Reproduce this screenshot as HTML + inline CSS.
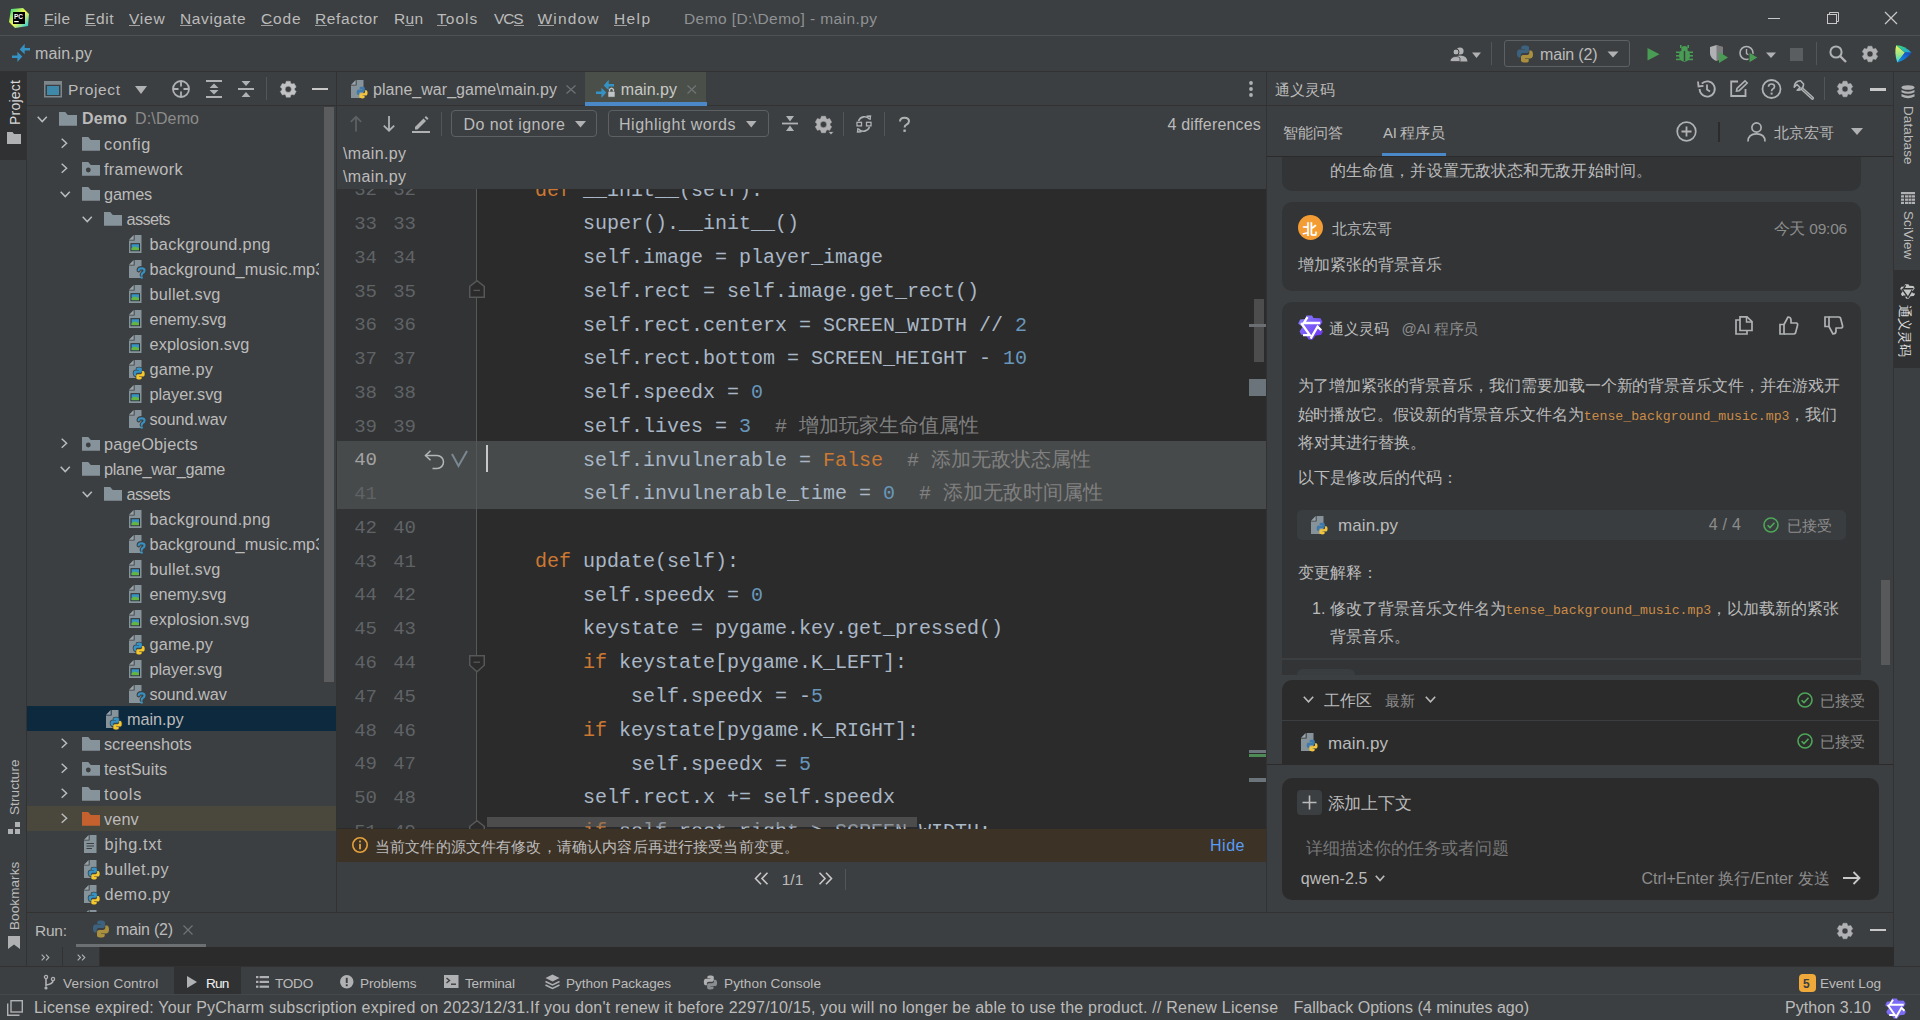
<!DOCTYPE html>
<html><head><meta charset="utf-8">
<style>
*{margin:0;padding:0;box-sizing:border-box}
html,body{width:1920px;height:1020px;overflow:hidden;background:#3c3f41;font-family:"Liberation Sans",sans-serif;color:#bbbbbb}
.a{position:absolute}
.t{position:absolute;white-space:nowrap;line-height:1}
.mono{font-family:"Liberation Mono",monospace}
svg{position:absolute;overflow:visible}
</style></head><body>

<div class="a" style="left:0px;top:35px;width:1920px;height:1px;background:#4e5254;"></div>
<div class="a" style="left:0px;top:71px;width:1920px;height:1px;background:#323232;"></div>
<div class="a" style="left:26px;top:72px;width:1px;height:894px;background:#323232;"></div>
<div class="a" style="left:0px;top:72px;width:26px;height:88px;background:#2f3132;"></div>
<div class="a" style="left:27px;top:105px;width:309px;height:1px;background:#323232;"></div>
<div class="a" style="left:336px;top:72px;width:1px;height:840px;background:#323232;"></div>
<div class="a" style="left:337px;top:105px;width:929px;height:1px;background:#323232;"></div>
<div class="a" style="left:337px;top:189px;width:929px;height:640px;background:#2b2b2b;"></div>
<div class="a" style="left:337px;top:189px;width:139px;height:639px;background:#313335;"></div>
<div class="a" style="left:476px;top:189px;width:1px;height:639px;background:#555555;"></div>
<div class="a" style="left:337px;top:829px;width:929px;height:33px;background:#3d3226;"></div>
<div class="a" style="left:1266px;top:72px;width:1px;height:840px;background:#323232;"></div>
<div class="a" style="left:1893px;top:72px;width:1px;height:894px;background:#323232;"></div>
<div class="a" style="left:27px;top:912px;width:1866px;height:1px;background:#323232;"></div>
<div class="a" style="left:99px;top:947px;width:1795px;height:19px;background:#2b2b2b;"></div>
<div class="a" style="left:62px;top:947px;width:1px;height:19px;background:#323232;"></div>
<div class="a" style="left:99px;top:947px;width:1px;height:19px;background:#323232;"></div>
<div class="a" style="left:0px;top:966px;width:1920px;height:1px;background:#323232;"></div>
<div class="a" style="left:0px;top:994px;width:1920px;height:1px;background:#45484a;"></div>
<svg style="left:9px;top:8px" width="20" height="20" viewBox="0 0 20 20"><defs><linearGradient id="pcg" x1="0" y1="0" x2="1" y2="1"><stop offset="0" stop-color="#21d789"/><stop offset="0.5" stop-color="#fcf84a"/><stop offset="1" stop-color="#07c3f2"/></linearGradient></defs>
<path d="M2 1 L14 0 L20 6 L19 18 L6 20 L0 14 Z" fill="url(#pcg)"/>
<rect x="4" y="4" width="12" height="12" fill="#000"/>
<text x="5" y="10.5" font-family="Liberation Sans" font-weight="bold" font-size="6.5" fill="#fff">PC</text>
<rect x="5.2" y="13" width="4.5" height="1.2" fill="#fff"/></svg>
<div class="t" style="left:44.00px;top:10.88px;font-size:15.5px;color:#bbbbbb;letter-spacing:0.341px;">File</div>
<div class="a" style="left:44px;top:25px;width:10px;height:1px;background:#a0a0a0;"></div>
<div class="t" style="left:85.00px;top:10.88px;font-size:15.5px;color:#bbbbbb;letter-spacing:0.597px;">Edit</div>
<div class="a" style="left:85px;top:25px;width:11px;height:1px;background:#a0a0a0;"></div>
<div class="t" style="left:129.00px;top:10.88px;font-size:15.5px;color:#bbbbbb;letter-spacing:0.801px;">View</div>
<div class="a" style="left:129px;top:25px;width:11px;height:1px;background:#a0a0a0;"></div>
<div class="t" style="left:180.00px;top:10.88px;font-size:15.5px;color:#bbbbbb;letter-spacing:0.618px;">Navigate</div>
<div class="a" style="left:180px;top:25px;width:12px;height:1px;background:#a0a0a0;"></div>
<div class="t" style="left:261.00px;top:10.88px;font-size:15.5px;color:#bbbbbb;letter-spacing:0.815px;">Code</div>
<div class="a" style="left:261px;top:25px;width:12px;height:1px;background:#a0a0a0;"></div>
<div class="t" style="left:315.00px;top:10.88px;font-size:15.5px;color:#bbbbbb;letter-spacing:0.631px;">Refactor</div>
<div class="a" style="left:315px;top:25px;width:12px;height:1px;background:#a0a0a0;"></div>
<div class="t" style="left:394.00px;top:10.88px;font-size:15.5px;color:#bbbbbb;letter-spacing:0.282px;">Run</div>
<div class="a" style="left:405px;top:25px;width:9px;height:1px;background:#a0a0a0;"></div>
<div class="t" style="left:437.00px;top:10.88px;font-size:15.5px;color:#bbbbbb;letter-spacing:1.024px;">Tools</div>
<div class="a" style="left:437px;top:25px;width:10px;height:1px;background:#a0a0a0;"></div>
<div class="t" style="left:494.00px;top:10.88px;font-size:15.5px;color:#bbbbbb;letter-spacing:-1.186px;">VCS</div>
<div class="a" style="left:514px;top:25px;width:10px;height:1px;background:#a0a0a0;"></div>
<div class="t" style="left:537.50px;top:10.88px;font-size:15.5px;color:#bbbbbb;letter-spacing:1.174px;">Window</div>
<div class="a" style="left:538px;top:25px;width:16px;height:1px;background:#a0a0a0;"></div>
<div class="t" style="left:614.00px;top:10.88px;font-size:15.5px;color:#bbbbbb;letter-spacing:1.374px;">Help</div>
<div class="a" style="left:614px;top:25px;width:13px;height:1px;background:#a0a0a0;"></div>
<div class="t" style="left:684.00px;top:10.88px;font-size:15.5px;color:#8f9294;letter-spacing:0.414px;">Demo [D:\Demo] - main.py</div>
<svg style="left:1767px;top:12px" width="132" height="14" viewBox="0 0 132 14"><line x1="1" y1="6.5" x2="13" y2="6.5" stroke="#c8c8c8" stroke-width="1"/>
<rect x="60.5" y="2.5" width="9" height="9" fill="none" stroke="#c8c8c8" stroke-width="1"/>
<path d="M62.5 2.5 V0.5 H71.5 V9.5 H69.5" fill="none" stroke="#c8c8c8" stroke-width="1"/>
<path d="M118 0 L130 12 M130 0 L118 12" stroke="#c8c8c8" stroke-width="1.2"/></svg>
<svg style="left:12px;top:43px" width="18" height="19" viewBox="0 0 18 19"><path d="M7.7 6.4 L12.7 0.8 L12.7 4.9 L18 4.9 L18 7.5 L12.7 7.5 L12.7 11.2 Z" fill="#3592c4"/>
<path d="M10.3 13.6 L5.4 8.7 L5.4 12.4 L0 12.4 L0 15 L5.4 15 L5.4 19 Z" fill="#3592c4"/></svg>
<div class="t" style="left:35.00px;top:46.46px;font-size:16px;color:#bbbbbb;letter-spacing:0.163px;">main.py</div>
<svg style="left:1450px;top:47px" width="32" height="15" viewBox="0 0 32 15"><circle cx="10" cy="4" r="3.6" fill="#afb1b3"/><path d="M2.5 14.5 Q3 8.5 10 8.5 Q17 8.5 17.5 14.5 Z" fill="#afb1b3"/>
<circle cx="6" cy="5" r="3" fill="#afb1b3" stroke="#3c3f41" stroke-width="1"/><path d="M0 14.5 Q0.5 9.5 6 9.5 Q9 9.5 10 11 L10 14.5 Z" fill="#afb1b3" stroke="#3c3f41" stroke-width="0.8"/>
<path d="M22 5.5 L31 5.5 L26.5 11 Z" fill="#afb1b3"/></svg>
<div class="a" style="left:1491px;top:42px;width:1px;height:23px;background:#515658;"></div>
<div class="a" style="left:1504px;top:40px;width:126px;height:27px;border:1px solid #5e6163;border-radius:3px"></div>
<svg style="left:1516px;top:45px" width="18" height="18" viewBox="0 0 18 18"><g opacity="0.6"><path d="M8.8 0.5 C5 0.5 5.3 2.2 5.3 2.2 L5.3 4 L9 4 L9 4.6 L3.6 4.6 C3.6 4.6 1 4.3 1 8.4 C1 12.5 3.3 12.4 3.3 12.4 L4.7 12.4 L4.7 10.4 C4.7 10.4 4.6 8.1 7 8.1 L10.8 8.1 C10.8 8.1 13 8.1 13 6 L13 2.6 C13 2.6 13.3 0.5 8.8 0.5 Z" fill="#3d7aab"/>
<path d="M9.2 17.5 C13 17.5 12.7 15.8 12.7 15.8 L12.7 14 L9 14 L9 13.4 L14.4 13.4 C14.4 13.4 17 13.7 17 9.6 C17 5.5 14.7 5.6 14.7 5.6 L13.3 5.6 L13.3 7.6 C13.3 7.6 13.4 9.9 11 9.9 L7.2 9.9 C7.2 9.9 5 9.9 5 12 L5 15.4 C5 15.4 4.7 17.5 9.2 17.5 Z" fill="#f2c53d"/></g></svg>
<div class="t" style="left:1540.00px;top:47.46px;font-size:16px;color:#bbbbbb;letter-spacing:-0.169px;">main (2)</div>
<svg style="left:1607px;top:51px" width="12" height="7" viewBox="0 0 12 7"><path d="M0.5 0.5 L11.5 0.5 L6 6.5 Z" fill="#afb1b3"/></svg>
<svg style="left:1647px;top:48px" width="13" height="13" viewBox="0 0 13 13"><path d="M0.5 0 L12.5 6.25 L0.5 12.5 Z" fill="#499c54"/></svg>
<svg style="left:1676px;top:45px" width="17" height="17" viewBox="0 0 17 17"><g fill="#499c54"><ellipse cx="8.5" cy="10.5" rx="5.5" ry="6.2"/><ellipse cx="8.5" cy="3.8" rx="3.2" ry="2.8"/>
<rect x="0" y="6.5" width="17" height="1.6"/><rect x="0" y="10" width="17" height="1.6"/><rect x="0" y="13.6" width="17" height="1.6"/>
<rect x="4" y="0" width="1.6" height="3"/><rect x="11.4" y="0" width="1.6" height="3"/></g><rect x="7.8" y="6" width="1.4" height="10" fill="#3c3f41"/></svg>
<svg style="left:1709px;top:45px" width="19" height="18" viewBox="0 0 19 18"><path d="M1 2 L7.5 0 L14 2 L14 8 C14 12 10.5 15 7.5 16 C4.5 15 1 12 1 8 Z" fill="#afb1b3"/><path d="M7.5 0 L14 2 L14 8 C14 12 10.5 15 7.5 16 Z" fill="#3c3f41" opacity="0.45"/>
<path d="M10 7 L19 12.5 L10 18 Z" fill="#499c54"/></svg>
<svg style="left:1739px;top:45px" width="38" height="18" viewBox="0 0 38 18"><circle cx="7.5" cy="8" r="6.5" fill="none" stroke="#afb1b3" stroke-width="1.6"/><path d="M7.5 4 V8.5 L10 10" fill="none" stroke="#afb1b3" stroke-width="1.4"/>
<path d="M10 7 L19 12.5 L10 18 Z" fill="#499c54" stroke="#3c3f41" stroke-width="1"/>
<path d="M27 7.5 L37 7.5 L32 13 Z" fill="#afb1b3"/></svg>
<div class="a" style="left:1790px;top:48px;width:13px;height:13px;background:#5b5e60;"></div>
<div class="a" style="left:1816px;top:42px;width:1px;height:23px;background:#515658;"></div>
<svg style="left:1829px;top:45px" width="18" height="18" viewBox="0 0 18 18"><circle cx="7" cy="7" r="5.6" fill="none" stroke="#afb1b3" stroke-width="2"/><path d="M11 11 L17 17" stroke="#afb1b3" stroke-width="2.4"/></svg>
<svg style="left:1862px;top:46px" width="16" height="16" viewBox="0 0 16 16"><path fill="#afb1b3" fill-rule="evenodd" stroke="#afb1b3" stroke-width="0.5" stroke-linejoin="round" d="M5.48 2.34 L6.06 0.24 L9.94 0.24 L10.52 2.34 L11.64 2.98 L13.75 2.44 L15.69 5.79 L14.17 7.35 L14.17 8.65 L15.69 10.21 L13.75 13.56 L11.64 13.02 L10.52 13.66 L9.94 15.76 L6.06 15.76 L5.48 13.66 L4.36 13.02 L2.25 13.56 L0.31 10.21 L1.83 8.65 L1.83 7.35 L0.31 5.79 L2.25 2.44 L4.36 2.98 Z M8 5.0 A3.0 3.0 0 1 0 8 11.0 A3.0 3.0 0 1 0 8 5.0 Z"/></svg>
<svg style="left:1894px;top:44px" width="18" height="19" viewBox="0 0 18 19"><defs><linearGradient id="gl1" x1="0" y1="0" x2="0" y2="1"><stop offset="0" stop-color="#f0f55a"/><stop offset="0.55" stop-color="#9be48a"/><stop offset="1" stop-color="#2ed5e6"/></linearGradient>
<linearGradient id="gl2" x1="0" y1="0" x2="1" y2="1"><stop offset="0" stop-color="#3ee070"/><stop offset="1" stop-color="#1a9ae6"/></linearGradient>
<linearGradient id="gl3" x1="1" y1="0" x2="0" y2="1"><stop offset="0" stop-color="#1a45c0"/><stop offset="1" stop-color="#0d9be8"/></linearGradient></defs>
<path d="M2.2 1.2 Q0 9 3.3 18.5 L10.9 8.6 Z" fill="url(#gl1)"/><path d="M2.2 1.2 Q11 1.5 17.6 8.8 L10.9 8.6 Z" fill="url(#gl2)"/><path d="M10.9 8.6 L17.6 8.8 Q12 16 3.3 18.5 Z" fill="url(#gl3)"/></svg>
<div class="t" style="left:0.00px;top:-0.85px;font-size:1px;color:#bbbbbb;"></div>
<div class="t" style="left:21px;top:80px;font-size:14px;color:#d8d8d8;transform-origin:0 0;transform:rotate(-90deg) translate(-45px,-13px);letter-spacing:0.2px">Project</div>
<svg style="left:7px;top:132px" width="14" height="12" viewBox="0 0 14 12"><path d="M0 0 H5.5 L7 2 H14 V12 H0 Z" fill="#afb1b3"/></svg>
<div class="t" style="left:21px;top:757px;font-size:13.5px;color:#bbbbbb;transform-origin:0 0;transform:rotate(-90deg) translate(-58px,-13px);letter-spacing:0.1px">Structure</div>
<svg style="left:8px;top:822px" width="12" height="12" viewBox="0 0 12 12"><rect x="0" y="7" width="5" height="5" fill="#afb1b3"/><rect x="7" y="7" width="5" height="5" fill="#afb1b3"/><rect x="7" y="0" width="5" height="5" fill="#afb1b3"/></svg>
<div class="t" style="left:21px;top:863px;font-size:13.5px;color:#bbbbbb;transform-origin:0 0;transform:rotate(-90deg) translate(-67px,-13px);letter-spacing:0.1px">Bookmarks</div>
<svg style="left:8px;top:936px" width="12" height="13" viewBox="0 0 12 13"><path d="M0 0 H12 V13 L6 8.5 L0 13 Z" fill="#afb1b3"/></svg>
<svg style="left:44px;top:81px" width="18" height="16.5" viewBox="0 0 18 16.5"><rect x="0.75" y="0.75" width="16.5" height="15" fill="none" stroke="#7d878d" stroke-width="1.5"/><rect x="0.75" y="0.75" width="16.5" height="3" fill="#7d878d"/><rect x="3" y="5" width="12" height="9" fill="#3e88aa"/></svg>
<div class="t" style="left:68.00px;top:81.88px;font-size:15.5px;color:#bbbbbb;letter-spacing:0.626px;">Project</div>
<svg style="left:135px;top:86px" width="12" height="8" viewBox="0 0 12 8"><path d="M0 0 H12 L6 8 Z" fill="#afb1b3"/></svg>
<svg style="left:172px;top:80px" width="18" height="18" viewBox="0 0 18 18"><circle cx="9" cy="9" r="8" fill="none" stroke="#afb1b3" stroke-width="1.8"/><path d="M9 1 V6.5 M9 11.5 V17 M1 9 H6.5 M11.5 9 H17" stroke="#afb1b3" stroke-width="1.8"/></svg>
<svg style="left:206px;top:80px" width="16" height="18" viewBox="0 0 16 18"><path d="M0 1 H16 M0 17 H16" stroke="#afb1b3" stroke-width="1.8"/><path d="M8 3.5 L12.5 8 H3.5 Z M8 14.5 L12.5 10 H3.5 Z" fill="#afb1b3"/></svg>
<svg style="left:238px;top:80px" width="16" height="18" viewBox="0 0 16 18"><path d="M0 9 H16" stroke="#afb1b3" stroke-width="2"/><path d="M8 6 L12.5 1 H3.5 Z M8 12 L12.5 17 H3.5 Z" fill="#afb1b3"/></svg>
<div class="a" style="left:266px;top:77px;width:1px;height:23px;background:#515658;"></div>
<svg style="left:279.5px;top:81px" width="16.5" height="16.5" viewBox="0 0 16 16"><path fill="#c0c2c4" fill-rule="evenodd" stroke="#afb1b3" stroke-width="0.5" stroke-linejoin="round" d="M5.48 2.34 L6.06 0.24 L9.94 0.24 L10.52 2.34 L11.64 2.98 L13.75 2.44 L15.69 5.79 L14.17 7.35 L14.17 8.65 L15.69 10.21 L13.75 13.56 L11.64 13.02 L10.52 13.66 L9.94 15.76 L6.06 15.76 L5.48 13.66 L4.36 13.02 L2.25 13.56 L0.31 10.21 L1.83 8.65 L1.83 7.35 L0.31 5.79 L2.25 2.44 L4.36 2.98 Z M8 5.0 A3.0 3.0 0 1 0 8 11.0 A3.0 3.0 0 1 0 8 5.0 Z"/></svg>
<div class="a" style="left:312px;top:88px;width:16px;height:2px;background:#c8c8c8;"></div>
<div class="a" style="left:27px;top:706px;width:309px;height:25px;background:#0d293e;"></div>
<div class="a" style="left:27px;top:806px;width:309px;height:25px;background:#4a473d;"></div>
<div class="a" style="left:27px;top:106px;width:292px;height:806px;overflow:hidden">
<svg style="left:10.00px;top:9.50px" width="10.5" height="7" viewBox="0 0 10.5 7"><path d="M0.7 0.7 L5.25 5.6 L9.8 0.7" fill="none" stroke="#b9bbbd" stroke-width="1.5"/></svg>
<svg style="left:32.00px;top:5.50px" width="18" height="14" viewBox="0 0 18 14"><path d="M0 0 H6.2 L8.8 3 H18 V13.8 H0 Z" fill="#87939a"/></svg>
<div class="t" style="left:55.00px;top:5.46px;font-size:16px;color:#bbbbbb;font-weight:bold;letter-spacing:0.182px;">Demo</div>
<div class="t" style="left:108.00px;top:5.46px;font-size:16px;color:#8c8c8c;letter-spacing:0.146px;">D:\Demo</div>
<svg style="left:33.90px;top:31.50px" width="6.3" height="10.5" viewBox="0 0 6.3 10.5"><path d="M0.7 0.7 L5.6 5.25 L0.7 9.8" fill="none" stroke="#b9bbbd" stroke-width="1.5"/></svg>
<svg style="left:54.50px;top:30.50px" width="18" height="14" viewBox="0 0 18 14"><path d="M0 0 H6.2 L8.8 3 H18 V13.8 H0 Z" fill="#87939a"/></svg>
<div class="t" style="left:77.00px;top:30.20px;font-size:16.3px;color:#bbbbbb;letter-spacing:0.551px;">config</div>
<svg style="left:33.90px;top:56.50px" width="6.3" height="10.5" viewBox="0 0 6.3 10.5"><path d="M0.7 0.7 L5.6 5.25 L0.7 9.8" fill="none" stroke="#b9bbbd" stroke-width="1.5"/></svg>
<svg style="left:54.50px;top:55.50px" width="18" height="14" viewBox="0 0 18 14"><path d="M0 0 H6.2 L8.8 3 H18 V13.8 H0 Z" fill="#87939a"/><circle cx="6.3" cy="8" r="2.4" fill="#3c3f41"/></svg>
<div class="t" style="left:77.00px;top:55.20px;font-size:16.3px;color:#bbbbbb;letter-spacing:0.333px;">framework</div>
<svg style="left:32.50px;top:84.50px" width="10.5" height="7" viewBox="0 0 10.5 7"><path d="M0.7 0.7 L5.25 5.6 L9.8 0.7" fill="none" stroke="#b9bbbd" stroke-width="1.5"/></svg>
<svg style="left:54.50px;top:80.50px" width="18" height="14" viewBox="0 0 18 14"><path d="M0 0 H6.2 L8.8 3 H18 V13.8 H0 Z" fill="#87939a"/></svg>
<div class="t" style="left:77.00px;top:80.20px;font-size:16.3px;color:#bbbbbb;letter-spacing:-0.169px;">games</div>
<svg style="left:55.00px;top:109.50px" width="10.5" height="7" viewBox="0 0 10.5 7"><path d="M0.7 0.7 L5.25 5.6 L9.8 0.7" fill="none" stroke="#b9bbbd" stroke-width="1.5"/></svg>
<svg style="left:77.00px;top:105.50px" width="18" height="14" viewBox="0 0 18 14"><path d="M0 0 H6.2 L8.8 3 H18 V13.8 H0 Z" fill="#87939a"/></svg>
<div class="t" style="left:99.50px;top:105.20px;font-size:16.3px;color:#bbbbbb;letter-spacing:-0.622px;">assets</div>
<svg style="left:101.80px;top:129.00px" width="12.5" height="18" viewBox="0 0 12.5 18"><path d="M5.6 0 H12.5 V18 H0 V5.6 H5.6 Z" fill="#87939a"/><path d="M0 4.7 L4.7 0 V4.7 Z" fill="#9aa5ab"/><rect x="1.5" y="8.2" width="9.5" height="8" fill="#2b2d2e"/><rect x="2.5" y="9.2" width="7.5" height="6" fill="#3592c4"/><path d="M2.5 15.2 V13.2 Q5 10.6 7 12 Q8.6 13 10 12.8 V15.2 Z" fill="#62b543"/></svg>
<div class="t" style="left:122.50px;top:130.20px;font-size:16.3px;color:#bbbbbb;letter-spacing:0.314px;">background.png</div>
<svg style="left:101.80px;top:154.00px" width="12.5" height="18" viewBox="0 0 12.5 18"><path d="M5.6 0 H12.5 V18 H0 V5.6 H5.6 Z" fill="#87939a"/><path d="M0 4.7 L4.7 0 V4.7 Z" fill="#9aa5ab"/><g fill="none" stroke-linecap="round"><path d="M9.6 10.3 Q9.8 8.2 12.6 8.2 Q15.6 8.3 15.5 10.6 Q15.4 12.2 13.6 13.2 Q12.7 13.8 12.7 15" stroke="#3c3f41" stroke-width="4.2"/><path d="M9.6 10.3 Q9.8 8.2 12.6 8.2 Q15.6 8.3 15.5 10.6 Q15.4 12.2 13.6 13.2 Q12.7 13.8 12.7 15" stroke="#3592c4" stroke-width="2.1"/></g><circle cx="12.7" cy="17.6" r="1.25" fill="#3592c4"/></svg>
<div class="t" style="left:122.50px;top:155.20px;font-size:16.3px;color:#bbbbbb;letter-spacing:0.102px;">background_music.mp3</div>
<svg style="left:101.80px;top:179.00px" width="12.5" height="18" viewBox="0 0 12.5 18"><path d="M5.6 0 H12.5 V18 H0 V5.6 H5.6 Z" fill="#87939a"/><path d="M0 4.7 L4.7 0 V4.7 Z" fill="#9aa5ab"/><rect x="1.5" y="8.2" width="9.5" height="8" fill="#2b2d2e"/><rect x="2.5" y="9.2" width="7.5" height="6" fill="#3592c4"/><path d="M2.5 15.2 V13.2 Q5 10.6 7 12 Q8.6 13 10 12.8 V15.2 Z" fill="#62b543"/></svg>
<div class="t" style="left:122.50px;top:180.20px;font-size:16.3px;color:#bbbbbb;letter-spacing:0.238px;">bullet.svg</div>
<svg style="left:101.80px;top:204.00px" width="12.5" height="18" viewBox="0 0 12.5 18"><path d="M5.6 0 H12.5 V18 H0 V5.6 H5.6 Z" fill="#87939a"/><path d="M0 4.7 L4.7 0 V4.7 Z" fill="#9aa5ab"/><rect x="1.5" y="8.2" width="9.5" height="8" fill="#2b2d2e"/><rect x="2.5" y="9.2" width="7.5" height="6" fill="#3592c4"/><path d="M2.5 15.2 V13.2 Q5 10.6 7 12 Q8.6 13 10 12.8 V15.2 Z" fill="#62b543"/></svg>
<div class="t" style="left:122.50px;top:205.20px;font-size:16.3px;color:#bbbbbb;letter-spacing:-0.077px;">enemy.svg</div>
<svg style="left:101.80px;top:229.00px" width="12.5" height="18" viewBox="0 0 12.5 18"><path d="M5.6 0 H12.5 V18 H0 V5.6 H5.6 Z" fill="#87939a"/><path d="M0 4.7 L4.7 0 V4.7 Z" fill="#9aa5ab"/><rect x="1.5" y="8.2" width="9.5" height="8" fill="#2b2d2e"/><rect x="2.5" y="9.2" width="7.5" height="6" fill="#3592c4"/><path d="M2.5 15.2 V13.2 Q5 10.6 7 12 Q8.6 13 10 12.8 V15.2 Z" fill="#62b543"/></svg>
<div class="t" style="left:122.50px;top:230.20px;font-size:16.3px;color:#bbbbbb;letter-spacing:0.095px;">explosion.svg</div>
<svg style="left:101.80px;top:254.00px" width="12.5" height="18" viewBox="0 0 12.5 18"><path d="M5.6 0 H12.5 V18 H0 V5.6 H5.6 Z" fill="#87939a"/><path d="M0 4.7 L4.7 0 V4.7 Z" fill="#9aa5ab"/><g transform="translate(3.8,7.2) scale(0.7)"><path d="M8.8 0.5 C5 0.5 5.3 2.2 5.3 2.2 L5.3 4 L9 4 L9 4.6 L3.6 4.6 C3.6 4.6 1 4.3 1 8.4 C1 12.5 3.3 12.4 3.3 12.4 L4.7 12.4 L4.7 10.4 C4.7 10.4 4.6 8.1 7 8.1 L10.8 8.1 C10.8 8.1 13 8.1 13 6 L13 2.6 C13 2.6 13.3 0.5 8.8 0.5 Z" fill="#3c3f41" stroke="#3c3f41" stroke-width="2.2"/>
<path d="M9.2 17.5 C13 17.5 12.7 15.8 12.7 15.8 L12.7 14 L9 14 L9 13.4 L14.4 13.4 C14.4 13.4 17 13.7 17 9.6 C17 5.5 14.7 5.6 14.7 5.6 L13.3 5.6 L13.3 7.6 C13.3 7.6 13.4 9.9 11 9.9 L7.2 9.9 C7.2 9.9 5 9.9 5 12 L5 15.4 C5 15.4 4.7 17.5 9.2 17.5 Z" fill="#3c3f41" stroke="#3c3f41" stroke-width="2.2"/><path d="M8.8 0.5 C5 0.5 5.3 2.2 5.3 2.2 L5.3 4 L9 4 L9 4.6 L3.6 4.6 C3.6 4.6 1 4.3 1 8.4 C1 12.5 3.3 12.4 3.3 12.4 L4.7 12.4 L4.7 10.4 C4.7 10.4 4.6 8.1 7 8.1 L10.8 8.1 C10.8 8.1 13 8.1 13 6 L13 2.6 C13 2.6 13.3 0.5 8.8 0.5 Z" fill="#3592c4"/>
<path d="M9.2 17.5 C13 17.5 12.7 15.8 12.7 15.8 L12.7 14 L9 14 L9 13.4 L14.4 13.4 C14.4 13.4 17 13.7 17 9.6 C17 5.5 14.7 5.6 14.7 5.6 L13.3 5.6 L13.3 7.6 C13.3 7.6 13.4 9.9 11 9.9 L7.2 9.9 C7.2 9.9 5 9.9 5 12 L5 15.4 C5 15.4 4.7 17.5 9.2 17.5 Z" fill="#f4c82d"/></g></svg>
<div class="t" style="left:122.50px;top:255.20px;font-size:16.3px;color:#bbbbbb;letter-spacing:0.147px;">game.py</div>
<svg style="left:101.80px;top:279.00px" width="12.5" height="18" viewBox="0 0 12.5 18"><path d="M5.6 0 H12.5 V18 H0 V5.6 H5.6 Z" fill="#87939a"/><path d="M0 4.7 L4.7 0 V4.7 Z" fill="#9aa5ab"/><rect x="1.5" y="8.2" width="9.5" height="8" fill="#2b2d2e"/><rect x="2.5" y="9.2" width="7.5" height="6" fill="#3592c4"/><path d="M2.5 15.2 V13.2 Q5 10.6 7 12 Q8.6 13 10 12.8 V15.2 Z" fill="#62b543"/></svg>
<div class="t" style="left:122.50px;top:280.20px;font-size:16.3px;color:#bbbbbb;letter-spacing:-0.055px;">player.svg</div>
<svg style="left:101.80px;top:304.00px" width="12.5" height="18" viewBox="0 0 12.5 18"><path d="M5.6 0 H12.5 V18 H0 V5.6 H5.6 Z" fill="#87939a"/><path d="M0 4.7 L4.7 0 V4.7 Z" fill="#9aa5ab"/><g fill="none" stroke-linecap="round"><path d="M9.6 10.3 Q9.8 8.2 12.6 8.2 Q15.6 8.3 15.5 10.6 Q15.4 12.2 13.6 13.2 Q12.7 13.8 12.7 15" stroke="#3c3f41" stroke-width="4.2"/><path d="M9.6 10.3 Q9.8 8.2 12.6 8.2 Q15.6 8.3 15.5 10.6 Q15.4 12.2 13.6 13.2 Q12.7 13.8 12.7 15" stroke="#3592c4" stroke-width="2.1"/></g><circle cx="12.7" cy="17.6" r="1.25" fill="#3592c4"/></svg>
<div class="t" style="left:122.50px;top:305.20px;font-size:16.3px;color:#bbbbbb;letter-spacing:-0.066px;">sound.wav</div>
<svg style="left:33.90px;top:331.50px" width="6.3" height="10.5" viewBox="0 0 6.3 10.5"><path d="M0.7 0.7 L5.6 5.25 L0.7 9.8" fill="none" stroke="#b9bbbd" stroke-width="1.5"/></svg>
<svg style="left:54.50px;top:330.50px" width="18" height="14" viewBox="0 0 18 14"><path d="M0 0 H6.2 L8.8 3 H18 V13.8 H0 Z" fill="#87939a"/><circle cx="6.3" cy="8" r="2.4" fill="#3c3f41"/></svg>
<div class="t" style="left:77.00px;top:330.20px;font-size:16.3px;color:#bbbbbb;letter-spacing:0.228px;">pageObjects</div>
<svg style="left:32.50px;top:359.50px" width="10.5" height="7" viewBox="0 0 10.5 7"><path d="M0.7 0.7 L5.25 5.6 L9.8 0.7" fill="none" stroke="#b9bbbd" stroke-width="1.5"/></svg>
<svg style="left:54.50px;top:355.50px" width="18" height="14" viewBox="0 0 18 14"><path d="M0 0 H6.2 L8.8 3 H18 V13.8 H0 Z" fill="#87939a"/></svg>
<div class="t" style="left:77.00px;top:355.20px;font-size:16.3px;color:#bbbbbb;letter-spacing:-0.274px;">plane_war_game</div>
<svg style="left:55.00px;top:384.50px" width="10.5" height="7" viewBox="0 0 10.5 7"><path d="M0.7 0.7 L5.25 5.6 L9.8 0.7" fill="none" stroke="#b9bbbd" stroke-width="1.5"/></svg>
<svg style="left:77.00px;top:380.50px" width="18" height="14" viewBox="0 0 18 14"><path d="M0 0 H6.2 L8.8 3 H18 V13.8 H0 Z" fill="#87939a"/></svg>
<div class="t" style="left:99.50px;top:380.20px;font-size:16.3px;color:#bbbbbb;letter-spacing:-0.602px;">assets</div>
<svg style="left:101.80px;top:404.00px" width="12.5" height="18" viewBox="0 0 12.5 18"><path d="M5.6 0 H12.5 V18 H0 V5.6 H5.6 Z" fill="#87939a"/><path d="M0 4.7 L4.7 0 V4.7 Z" fill="#9aa5ab"/><rect x="1.5" y="8.2" width="9.5" height="8" fill="#2b2d2e"/><rect x="2.5" y="9.2" width="7.5" height="6" fill="#3592c4"/><path d="M2.5 15.2 V13.2 Q5 10.6 7 12 Q8.6 13 10 12.8 V15.2 Z" fill="#62b543"/></svg>
<div class="t" style="left:122.50px;top:405.20px;font-size:16.3px;color:#bbbbbb;letter-spacing:0.314px;">background.png</div>
<svg style="left:101.80px;top:429.00px" width="12.5" height="18" viewBox="0 0 12.5 18"><path d="M5.6 0 H12.5 V18 H0 V5.6 H5.6 Z" fill="#87939a"/><path d="M0 4.7 L4.7 0 V4.7 Z" fill="#9aa5ab"/><g fill="none" stroke-linecap="round"><path d="M9.6 10.3 Q9.8 8.2 12.6 8.2 Q15.6 8.3 15.5 10.6 Q15.4 12.2 13.6 13.2 Q12.7 13.8 12.7 15" stroke="#3c3f41" stroke-width="4.2"/><path d="M9.6 10.3 Q9.8 8.2 12.6 8.2 Q15.6 8.3 15.5 10.6 Q15.4 12.2 13.6 13.2 Q12.7 13.8 12.7 15" stroke="#3592c4" stroke-width="2.1"/></g><circle cx="12.7" cy="17.6" r="1.25" fill="#3592c4"/></svg>
<div class="t" style="left:122.50px;top:430.20px;font-size:16.3px;color:#bbbbbb;letter-spacing:0.102px;">background_music.mp3</div>
<svg style="left:101.80px;top:454.00px" width="12.5" height="18" viewBox="0 0 12.5 18"><path d="M5.6 0 H12.5 V18 H0 V5.6 H5.6 Z" fill="#87939a"/><path d="M0 4.7 L4.7 0 V4.7 Z" fill="#9aa5ab"/><rect x="1.5" y="8.2" width="9.5" height="8" fill="#2b2d2e"/><rect x="2.5" y="9.2" width="7.5" height="6" fill="#3592c4"/><path d="M2.5 15.2 V13.2 Q5 10.6 7 12 Q8.6 13 10 12.8 V15.2 Z" fill="#62b543"/></svg>
<div class="t" style="left:122.50px;top:455.20px;font-size:16.3px;color:#bbbbbb;letter-spacing:0.238px;">bullet.svg</div>
<svg style="left:101.80px;top:479.00px" width="12.5" height="18" viewBox="0 0 12.5 18"><path d="M5.6 0 H12.5 V18 H0 V5.6 H5.6 Z" fill="#87939a"/><path d="M0 4.7 L4.7 0 V4.7 Z" fill="#9aa5ab"/><rect x="1.5" y="8.2" width="9.5" height="8" fill="#2b2d2e"/><rect x="2.5" y="9.2" width="7.5" height="6" fill="#3592c4"/><path d="M2.5 15.2 V13.2 Q5 10.6 7 12 Q8.6 13 10 12.8 V15.2 Z" fill="#62b543"/></svg>
<div class="t" style="left:122.50px;top:480.20px;font-size:16.3px;color:#bbbbbb;letter-spacing:-0.077px;">enemy.svg</div>
<svg style="left:101.80px;top:504.00px" width="12.5" height="18" viewBox="0 0 12.5 18"><path d="M5.6 0 H12.5 V18 H0 V5.6 H5.6 Z" fill="#87939a"/><path d="M0 4.7 L4.7 0 V4.7 Z" fill="#9aa5ab"/><rect x="1.5" y="8.2" width="9.5" height="8" fill="#2b2d2e"/><rect x="2.5" y="9.2" width="7.5" height="6" fill="#3592c4"/><path d="M2.5 15.2 V13.2 Q5 10.6 7 12 Q8.6 13 10 12.8 V15.2 Z" fill="#62b543"/></svg>
<div class="t" style="left:122.50px;top:505.20px;font-size:16.3px;color:#bbbbbb;letter-spacing:0.095px;">explosion.svg</div>
<svg style="left:101.80px;top:529.00px" width="12.5" height="18" viewBox="0 0 12.5 18"><path d="M5.6 0 H12.5 V18 H0 V5.6 H5.6 Z" fill="#87939a"/><path d="M0 4.7 L4.7 0 V4.7 Z" fill="#9aa5ab"/><g transform="translate(3.8,7.2) scale(0.7)"><path d="M8.8 0.5 C5 0.5 5.3 2.2 5.3 2.2 L5.3 4 L9 4 L9 4.6 L3.6 4.6 C3.6 4.6 1 4.3 1 8.4 C1 12.5 3.3 12.4 3.3 12.4 L4.7 12.4 L4.7 10.4 C4.7 10.4 4.6 8.1 7 8.1 L10.8 8.1 C10.8 8.1 13 8.1 13 6 L13 2.6 C13 2.6 13.3 0.5 8.8 0.5 Z" fill="#3c3f41" stroke="#3c3f41" stroke-width="2.2"/>
<path d="M9.2 17.5 C13 17.5 12.7 15.8 12.7 15.8 L12.7 14 L9 14 L9 13.4 L14.4 13.4 C14.4 13.4 17 13.7 17 9.6 C17 5.5 14.7 5.6 14.7 5.6 L13.3 5.6 L13.3 7.6 C13.3 7.6 13.4 9.9 11 9.9 L7.2 9.9 C7.2 9.9 5 9.9 5 12 L5 15.4 C5 15.4 4.7 17.5 9.2 17.5 Z" fill="#3c3f41" stroke="#3c3f41" stroke-width="2.2"/><path d="M8.8 0.5 C5 0.5 5.3 2.2 5.3 2.2 L5.3 4 L9 4 L9 4.6 L3.6 4.6 C3.6 4.6 1 4.3 1 8.4 C1 12.5 3.3 12.4 3.3 12.4 L4.7 12.4 L4.7 10.4 C4.7 10.4 4.6 8.1 7 8.1 L10.8 8.1 C10.8 8.1 13 8.1 13 6 L13 2.6 C13 2.6 13.3 0.5 8.8 0.5 Z" fill="#3592c4"/>
<path d="M9.2 17.5 C13 17.5 12.7 15.8 12.7 15.8 L12.7 14 L9 14 L9 13.4 L14.4 13.4 C14.4 13.4 17 13.7 17 9.6 C17 5.5 14.7 5.6 14.7 5.6 L13.3 5.6 L13.3 7.6 C13.3 7.6 13.4 9.9 11 9.9 L7.2 9.9 C7.2 9.9 5 9.9 5 12 L5 15.4 C5 15.4 4.7 17.5 9.2 17.5 Z" fill="#f4c82d"/></g></svg>
<div class="t" style="left:122.50px;top:530.20px;font-size:16.3px;color:#bbbbbb;letter-spacing:0.147px;">game.py</div>
<svg style="left:101.80px;top:554.00px" width="12.5" height="18" viewBox="0 0 12.5 18"><path d="M5.6 0 H12.5 V18 H0 V5.6 H5.6 Z" fill="#87939a"/><path d="M0 4.7 L4.7 0 V4.7 Z" fill="#9aa5ab"/><rect x="1.5" y="8.2" width="9.5" height="8" fill="#2b2d2e"/><rect x="2.5" y="9.2" width="7.5" height="6" fill="#3592c4"/><path d="M2.5 15.2 V13.2 Q5 10.6 7 12 Q8.6 13 10 12.8 V15.2 Z" fill="#62b543"/></svg>
<div class="t" style="left:122.50px;top:555.20px;font-size:16.3px;color:#bbbbbb;letter-spacing:-0.055px;">player.svg</div>
<svg style="left:101.80px;top:579.00px" width="12.5" height="18" viewBox="0 0 12.5 18"><path d="M5.6 0 H12.5 V18 H0 V5.6 H5.6 Z" fill="#87939a"/><path d="M0 4.7 L4.7 0 V4.7 Z" fill="#9aa5ab"/><g fill="none" stroke-linecap="round"><path d="M9.6 10.3 Q9.8 8.2 12.6 8.2 Q15.6 8.3 15.5 10.6 Q15.4 12.2 13.6 13.2 Q12.7 13.8 12.7 15" stroke="#3c3f41" stroke-width="4.2"/><path d="M9.6 10.3 Q9.8 8.2 12.6 8.2 Q15.6 8.3 15.5 10.6 Q15.4 12.2 13.6 13.2 Q12.7 13.8 12.7 15" stroke="#3592c4" stroke-width="2.1"/></g><circle cx="12.7" cy="17.6" r="1.25" fill="#3592c4"/></svg>
<div class="t" style="left:122.50px;top:580.20px;font-size:16.3px;color:#bbbbbb;letter-spacing:-0.066px;">sound.wav</div>
<svg style="left:79.30px;top:604.00px" width="12.5" height="18" viewBox="0 0 12.5 18"><path d="M5.6 0 H12.5 V18 H0 V5.6 H5.6 Z" fill="#87939a"/><path d="M0 4.7 L4.7 0 V4.7 Z" fill="#9aa5ab"/><g transform="translate(3.8,7.2) scale(0.7)"><path d="M8.8 0.5 C5 0.5 5.3 2.2 5.3 2.2 L5.3 4 L9 4 L9 4.6 L3.6 4.6 C3.6 4.6 1 4.3 1 8.4 C1 12.5 3.3 12.4 3.3 12.4 L4.7 12.4 L4.7 10.4 C4.7 10.4 4.6 8.1 7 8.1 L10.8 8.1 C10.8 8.1 13 8.1 13 6 L13 2.6 C13 2.6 13.3 0.5 8.8 0.5 Z" fill="#3c3f41" stroke="#3c3f41" stroke-width="2.2"/>
<path d="M9.2 17.5 C13 17.5 12.7 15.8 12.7 15.8 L12.7 14 L9 14 L9 13.4 L14.4 13.4 C14.4 13.4 17 13.7 17 9.6 C17 5.5 14.7 5.6 14.7 5.6 L13.3 5.6 L13.3 7.6 C13.3 7.6 13.4 9.9 11 9.9 L7.2 9.9 C7.2 9.9 5 9.9 5 12 L5 15.4 C5 15.4 4.7 17.5 9.2 17.5 Z" fill="#3c3f41" stroke="#3c3f41" stroke-width="2.2"/><path d="M8.8 0.5 C5 0.5 5.3 2.2 5.3 2.2 L5.3 4 L9 4 L9 4.6 L3.6 4.6 C3.6 4.6 1 4.3 1 8.4 C1 12.5 3.3 12.4 3.3 12.4 L4.7 12.4 L4.7 10.4 C4.7 10.4 4.6 8.1 7 8.1 L10.8 8.1 C10.8 8.1 13 8.1 13 6 L13 2.6 C13 2.6 13.3 0.5 8.8 0.5 Z" fill="#3592c4"/>
<path d="M9.2 17.5 C13 17.5 12.7 15.8 12.7 15.8 L12.7 14 L9 14 L9 13.4 L14.4 13.4 C14.4 13.4 17 13.7 17 9.6 C17 5.5 14.7 5.6 14.7 5.6 L13.3 5.6 L13.3 7.6 C13.3 7.6 13.4 9.9 11 9.9 L7.2 9.9 C7.2 9.9 5 9.9 5 12 L5 15.4 C5 15.4 4.7 17.5 9.2 17.5 Z" fill="#f4c82d"/></g></svg>
<div class="t" style="left:100.00px;top:605.20px;font-size:16.3px;color:#bbbbbb;letter-spacing:-0.063px;">main.py</div>
<svg style="left:33.90px;top:631.50px" width="6.3" height="10.5" viewBox="0 0 6.3 10.5"><path d="M0.7 0.7 L5.6 5.25 L0.7 9.8" fill="none" stroke="#b9bbbd" stroke-width="1.5"/></svg>
<svg style="left:54.50px;top:630.50px" width="18" height="14" viewBox="0 0 18 14"><path d="M0 0 H6.2 L8.8 3 H18 V13.8 H0 Z" fill="#87939a"/></svg>
<div class="t" style="left:77.00px;top:630.20px;font-size:16.3px;color:#bbbbbb;letter-spacing:-0.019px;">screenshots</div>
<svg style="left:33.90px;top:656.50px" width="6.3" height="10.5" viewBox="0 0 6.3 10.5"><path d="M0.7 0.7 L5.6 5.25 L0.7 9.8" fill="none" stroke="#b9bbbd" stroke-width="1.5"/></svg>
<svg style="left:54.50px;top:655.50px" width="18" height="14" viewBox="0 0 18 14"><path d="M0 0 H6.2 L8.8 3 H18 V13.8 H0 Z" fill="#87939a"/><circle cx="6.3" cy="8" r="2.4" fill="#3c3f41"/></svg>
<div class="t" style="left:77.00px;top:655.20px;font-size:16.3px;color:#bbbbbb;letter-spacing:0.099px;">testSuits</div>
<svg style="left:33.90px;top:681.50px" width="6.3" height="10.5" viewBox="0 0 6.3 10.5"><path d="M0.7 0.7 L5.6 5.25 L0.7 9.8" fill="none" stroke="#b9bbbd" stroke-width="1.5"/></svg>
<svg style="left:54.50px;top:680.50px" width="18" height="14" viewBox="0 0 18 14"><path d="M0 0 H6.2 L8.8 3 H18 V13.8 H0 Z" fill="#87939a"/></svg>
<div class="t" style="left:77.00px;top:680.20px;font-size:16.3px;color:#bbbbbb;letter-spacing:0.742px;">tools</div>
<svg style="left:33.90px;top:706.50px" width="6.3" height="10.5" viewBox="0 0 6.3 10.5"><path d="M0.7 0.7 L5.6 5.25 L0.7 9.8" fill="none" stroke="#b9bbbd" stroke-width="1.5"/></svg>
<svg style="left:54.50px;top:705.50px" width="18" height="14" viewBox="0 0 18 14"><path d="M0 0 H6.2 L8.8 3 H18 V13.8 H0 Z" fill="#c5612f"/></svg>
<div class="t" style="left:77.00px;top:705.20px;font-size:16.3px;color:#bbbbbb;letter-spacing:0.123px;">venv</div>
<svg style="left:56.80px;top:729.00px" width="12.5" height="18" viewBox="0 0 12.5 18"><path d="M5.6 0 H12.5 V18 H0 V5.6 H5.6 Z" fill="#87939a"/><path d="M0 4.7 L4.7 0 V4.7 Z" fill="#9aa5ab"/><path d="M2.5 8.5 H10 M2.5 11 H10 M2.5 13.5 H8" stroke="#3c3f41" stroke-width="1.1"/></svg>
<div class="t" style="left:77.50px;top:730.20px;font-size:16.3px;color:#bbbbbb;letter-spacing:0.635px;">bjhg.txt</div>
<svg style="left:56.80px;top:754.00px" width="12.5" height="18" viewBox="0 0 12.5 18"><path d="M5.6 0 H12.5 V18 H0 V5.6 H5.6 Z" fill="#87939a"/><path d="M0 4.7 L4.7 0 V4.7 Z" fill="#9aa5ab"/><g transform="translate(3.8,7.2) scale(0.7)"><path d="M8.8 0.5 C5 0.5 5.3 2.2 5.3 2.2 L5.3 4 L9 4 L9 4.6 L3.6 4.6 C3.6 4.6 1 4.3 1 8.4 C1 12.5 3.3 12.4 3.3 12.4 L4.7 12.4 L4.7 10.4 C4.7 10.4 4.6 8.1 7 8.1 L10.8 8.1 C10.8 8.1 13 8.1 13 6 L13 2.6 C13 2.6 13.3 0.5 8.8 0.5 Z" fill="#3c3f41" stroke="#3c3f41" stroke-width="2.2"/>
<path d="M9.2 17.5 C13 17.5 12.7 15.8 12.7 15.8 L12.7 14 L9 14 L9 13.4 L14.4 13.4 C14.4 13.4 17 13.7 17 9.6 C17 5.5 14.7 5.6 14.7 5.6 L13.3 5.6 L13.3 7.6 C13.3 7.6 13.4 9.9 11 9.9 L7.2 9.9 C7.2 9.9 5 9.9 5 12 L5 15.4 C5 15.4 4.7 17.5 9.2 17.5 Z" fill="#3c3f41" stroke="#3c3f41" stroke-width="2.2"/><path d="M8.8 0.5 C5 0.5 5.3 2.2 5.3 2.2 L5.3 4 L9 4 L9 4.6 L3.6 4.6 C3.6 4.6 1 4.3 1 8.4 C1 12.5 3.3 12.4 3.3 12.4 L4.7 12.4 L4.7 10.4 C4.7 10.4 4.6 8.1 7 8.1 L10.8 8.1 C10.8 8.1 13 8.1 13 6 L13 2.6 C13 2.6 13.3 0.5 8.8 0.5 Z" fill="#3592c4"/>
<path d="M9.2 17.5 C13 17.5 12.7 15.8 12.7 15.8 L12.7 14 L9 14 L9 13.4 L14.4 13.4 C14.4 13.4 17 13.7 17 9.6 C17 5.5 14.7 5.6 14.7 5.6 L13.3 5.6 L13.3 7.6 C13.3 7.6 13.4 9.9 11 9.9 L7.2 9.9 C7.2 9.9 5 9.9 5 12 L5 15.4 C5 15.4 4.7 17.5 9.2 17.5 Z" fill="#f4c82d"/></g></svg>
<div class="t" style="left:77.50px;top:755.20px;font-size:16.3px;color:#bbbbbb;letter-spacing:0.423px;">bullet.py</div>
<svg style="left:56.80px;top:779.00px" width="12.5" height="18" viewBox="0 0 12.5 18"><path d="M5.6 0 H12.5 V18 H0 V5.6 H5.6 Z" fill="#87939a"/><path d="M0 4.7 L4.7 0 V4.7 Z" fill="#9aa5ab"/><g transform="translate(3.8,7.2) scale(0.7)"><path d="M8.8 0.5 C5 0.5 5.3 2.2 5.3 2.2 L5.3 4 L9 4 L9 4.6 L3.6 4.6 C3.6 4.6 1 4.3 1 8.4 C1 12.5 3.3 12.4 3.3 12.4 L4.7 12.4 L4.7 10.4 C4.7 10.4 4.6 8.1 7 8.1 L10.8 8.1 C10.8 8.1 13 8.1 13 6 L13 2.6 C13 2.6 13.3 0.5 8.8 0.5 Z" fill="#3c3f41" stroke="#3c3f41" stroke-width="2.2"/>
<path d="M9.2 17.5 C13 17.5 12.7 15.8 12.7 15.8 L12.7 14 L9 14 L9 13.4 L14.4 13.4 C14.4 13.4 17 13.7 17 9.6 C17 5.5 14.7 5.6 14.7 5.6 L13.3 5.6 L13.3 7.6 C13.3 7.6 13.4 9.9 11 9.9 L7.2 9.9 C7.2 9.9 5 9.9 5 12 L5 15.4 C5 15.4 4.7 17.5 9.2 17.5 Z" fill="#3c3f41" stroke="#3c3f41" stroke-width="2.2"/><path d="M8.8 0.5 C5 0.5 5.3 2.2 5.3 2.2 L5.3 4 L9 4 L9 4.6 L3.6 4.6 C3.6 4.6 1 4.3 1 8.4 C1 12.5 3.3 12.4 3.3 12.4 L4.7 12.4 L4.7 10.4 C4.7 10.4 4.6 8.1 7 8.1 L10.8 8.1 C10.8 8.1 13 8.1 13 6 L13 2.6 C13 2.6 13.3 0.5 8.8 0.5 Z" fill="#3592c4"/>
<path d="M9.2 17.5 C13 17.5 12.7 15.8 12.7 15.8 L12.7 14 L9 14 L9 13.4 L14.4 13.4 C14.4 13.4 17 13.7 17 9.6 C17 5.5 14.7 5.6 14.7 5.6 L13.3 5.6 L13.3 7.6 C13.3 7.6 13.4 9.9 11 9.9 L7.2 9.9 C7.2 9.9 5 9.9 5 12 L5 15.4 C5 15.4 4.7 17.5 9.2 17.5 Z" fill="#f4c82d"/></g></svg>
<div class="t" style="left:77.50px;top:780.20px;font-size:16.3px;color:#bbbbbb;letter-spacing:0.497px;">demo.py</div>
<svg style="left:56.80px;top:804.00px" width="12.5" height="18" viewBox="0 0 12.5 18"><path d="M5.6 0 H12.5 V18 H0 V5.6 H5.6 Z" fill="#87939a"/><path d="M0 4.7 L4.7 0 V4.7 Z" fill="#9aa5ab"/><g transform="translate(3.8,7.2) scale(0.7)"><path d="M8.8 0.5 C5 0.5 5.3 2.2 5.3 2.2 L5.3 4 L9 4 L9 4.6 L3.6 4.6 C3.6 4.6 1 4.3 1 8.4 C1 12.5 3.3 12.4 3.3 12.4 L4.7 12.4 L4.7 10.4 C4.7 10.4 4.6 8.1 7 8.1 L10.8 8.1 C10.8 8.1 13 8.1 13 6 L13 2.6 C13 2.6 13.3 0.5 8.8 0.5 Z" fill="#3c3f41" stroke="#3c3f41" stroke-width="2.2"/>
<path d="M9.2 17.5 C13 17.5 12.7 15.8 12.7 15.8 L12.7 14 L9 14 L9 13.4 L14.4 13.4 C14.4 13.4 17 13.7 17 9.6 C17 5.5 14.7 5.6 14.7 5.6 L13.3 5.6 L13.3 7.6 C13.3 7.6 13.4 9.9 11 9.9 L7.2 9.9 C7.2 9.9 5 9.9 5 12 L5 15.4 C5 15.4 4.7 17.5 9.2 17.5 Z" fill="#3c3f41" stroke="#3c3f41" stroke-width="2.2"/><path d="M8.8 0.5 C5 0.5 5.3 2.2 5.3 2.2 L5.3 4 L9 4 L9 4.6 L3.6 4.6 C3.6 4.6 1 4.3 1 8.4 C1 12.5 3.3 12.4 3.3 12.4 L4.7 12.4 L4.7 10.4 C4.7 10.4 4.6 8.1 7 8.1 L10.8 8.1 C10.8 8.1 13 8.1 13 6 L13 2.6 C13 2.6 13.3 0.5 8.8 0.5 Z" fill="#3592c4"/>
<path d="M9.2 17.5 C13 17.5 12.7 15.8 12.7 15.8 L12.7 14 L9 14 L9 13.4 L14.4 13.4 C14.4 13.4 17 13.7 17 9.6 C17 5.5 14.7 5.6 14.7 5.6 L13.3 5.6 L13.3 7.6 C13.3 7.6 13.4 9.9 11 9.9 L7.2 9.9 C7.2 9.9 5 9.9 5 12 L5 15.4 C5 15.4 4.7 17.5 9.2 17.5 Z" fill="#f4c82d"/></g></svg>
<div class="t" style="left:77.50px;top:805.20px;font-size:16.3px;color:#bbbbbb;letter-spacing:20.255px;">data.py</div>
</div>
<div class="a" style="left:324px;top:107px;width:10px;height:575px;background:#5a5c5e;"></div>
<svg style="left:351px;top:80px" width="13" height="18" viewBox="0 0 13 18"><path d="M5.6 0 H12.5 V18 H0 V5.6 H5.6 Z" fill="#87939a"/><path d="M0 4.7 L4.7 0 V4.7 Z" fill="#9aa5ab"/><g transform="translate(5,6.5) scale(0.68)"><path d="M8.8 0.5 C5 0.5 5.3 2.2 5.3 2.2 L5.3 4 L9 4 L9 4.6 L3.6 4.6 C3.6 4.6 1 4.3 1 8.4 C1 12.5 3.3 12.4 3.3 12.4 L4.7 12.4 L4.7 10.4 C4.7 10.4 4.6 8.1 7 8.1 L10.8 8.1 C10.8 8.1 13 8.1 13 6 L13 2.6 C13 2.6 13.3 0.5 8.8 0.5 Z" fill="#3d7aab"/>
<path d="M9.2 17.5 C13 17.5 12.7 15.8 12.7 15.8 L12.7 14 L9 14 L9 13.4 L14.4 13.4 C14.4 13.4 17 13.7 17 9.6 C17 5.5 14.7 5.6 14.7 5.6 L13.3 5.6 L13.3 7.6 C13.3 7.6 13.4 9.9 11 9.9 L7.2 9.9 C7.2 9.9 5 9.9 5 12 L5 15.4 C5 15.4 4.7 17.5 9.2 17.5 Z" fill="#f2c53d"/></g></svg>
<div class="t" style="left:373.00px;top:82.46px;font-size:16px;color:#bbbbbb;letter-spacing:0.037px;">plane_war_game\main.py</div>
<svg style="left:566px;top:84.5px" width="10" height="9" viewBox="0 0 10 9"><path d="M0.5 0.5 L9.5 8.5 M9.5 0.5 L0.5 8.5" stroke="#6f7375" stroke-width="1.2"/></svg>
<div class="a" style="left:585px;top:72px;width:121px;height:30px;background:#4a5049;"></div>
<div class="a" style="left:585px;top:102px;width:122px;height:4px;background:#4a88c7;"></div>
<svg style="left:596px;top:79px" width="19" height="17" viewBox="0 0 19 17"><g transform="translate(0,0) scale(1)"><path d="M7.7 6.4 L12.7 0.8 L12.7 4.9 L18 4.9 L18 7.5 L12.7 7.5 L12.7 11.2 Z" fill="#3592c4"/>
<path d="M10.3 13.6 L5.4 8.7 L5.4 12.4 L0 12.4 L0 15 L5.4 15 L5.4 19 Z" fill="#3592c4"/></g>
<rect x="12" y="12.3" width="7" height="5.8" fill="#c2c5c8" stroke="#4a5049" stroke-width="0.6"/><path d="M13.6 12.5 V10.5 Q15.5 8 17.4 10.5 V12.5" fill="none" stroke="#c2c5c8" stroke-width="1.3"/></svg>
<div class="t" style="left:620.80px;top:81.96px;font-size:16px;color:#c8c8c8;letter-spacing:0.029px;">main.py</div>
<svg style="left:686.5px;top:84.5px" width="9.5" height="9" viewBox="0 0 9.5 9"><path d="M0.5 0.5 L9 8.5 M9 0.5 L0.5 8.5" stroke="#6f7375" stroke-width="1.2"/></svg>
<svg style="left:1249px;top:81px" width="4" height="16" viewBox="0 0 4 16"><circle cx="2" cy="2" r="1.9" fill="#afb1b3"/><circle cx="2" cy="8" r="1.9" fill="#afb1b3"/><circle cx="2" cy="14" r="1.9" fill="#afb1b3"/></svg>
<svg style="left:350px;top:116px" width="12" height="15.5" viewBox="0 0 12 15.5"><path d="M6 0.5 V15.5 M0.8 5.8 L6 0.8 L11.2 5.8" fill="none" stroke="#5d6163" stroke-width="1.8"/></svg>
<svg style="left:383px;top:116px" width="12" height="15.5" viewBox="0 0 12 15.5"><path d="M6 0 V15 M0.8 9.7 L6 14.7 L11.2 9.7" fill="none" stroke="#afb1b3" stroke-width="1.8"/></svg>
<svg style="left:412px;top:115px" width="18" height="18" viewBox="0 0 18 18"><path d="M3 12 L11.5 3.5 L14 6 L5.5 14.5 H3 Z" fill="#afb1b3"/><path d="M12.6 2.4 L14 1 L16.5 3.5 L15.1 4.9 Z" fill="#afb1b3"/><rect x="0" y="16" width="18" height="2" fill="#afb1b3"/></svg>
<div class="a" style="left:441px;top:112px;width:1px;height:24px;background:#515658;"></div>
<div class="a" style="left:451px;top:110px;width:146px;height:27px;border:1px solid #5e6163;border-radius:4px"></div>
<div class="t" style="left:463.50px;top:116.96px;font-size:16px;color:#bbbbbb;letter-spacing:0.453px;">Do not ignore</div>
<svg style="left:575px;top:121px" width="11" height="7" viewBox="0 0 11 7"><path d="M0 0 H11 L5.5 6.5 Z" fill="#afb1b3"/></svg>
<div class="a" style="left:608px;top:110px;width:161px;height:27px;border:1px solid #5e6163;border-radius:4px"></div>
<div class="t" style="left:619.00px;top:116.96px;font-size:16px;color:#bbbbbb;letter-spacing:0.508px;">Highlight words</div>
<svg style="left:746px;top:121px" width="10" height="7" viewBox="0 0 10 7"><path d="M0 0 H10.5 L5.25 6.5 Z" fill="#afb1b3"/></svg>
<svg style="left:782px;top:116px" width="16" height="15" viewBox="0 0 16 15"><path d="M0 7.5 H16" stroke="#afb1b3" stroke-width="1.8"/><path d="M8 5.5 L12 0 H4 Z M8 9.5 L12 15 H4 Z" fill="#afb1b3"/></svg>
<svg style="left:815px;top:116px" width="19" height="19" viewBox="0 0 19 19"><path transform="scale(1.06)" fill="#afb1b3" fill-rule="evenodd" stroke="#afb1b3" stroke-width="0.5" stroke-linejoin="round" d="M5.48 2.34 L6.06 0.24 L9.94 0.24 L10.52 2.34 L11.64 2.98 L13.75 2.44 L15.69 5.79 L14.17 7.35 L14.17 8.65 L15.69 10.21 L13.75 13.56 L11.64 13.02 L10.52 13.66 L9.94 15.76 L6.06 15.76 L5.48 13.66 L4.36 13.02 L2.25 13.56 L0.31 10.21 L1.83 8.65 L1.83 7.35 L0.31 5.79 L2.25 2.44 L4.36 2.98 Z M8 5.0 A3.0 3.0 0 1 0 8 11.0 A3.0 3.0 0 1 0 8 5.0 Z"/><path d="M13 15.5 H19 L16 19 Z" fill="#afb1b3" stroke="#3c3f41" stroke-width="0.8"/></svg>
<div class="a" style="left:843px;top:112px;width:1px;height:24px;background:#515658;"></div>
<svg style="left:856px;top:115px" width="16" height="18" viewBox="0 0 16 18"><path d="M2.5 6 A6.5 6.5 0 0 1 13.5 4" fill="none" stroke="#afb1b3" stroke-width="1.6"/><path d="M13.5 12 A6.5 6.5 0 0 1 2.5 14" fill="none" stroke="#afb1b3" stroke-width="1.6"/>
<path d="M10.5 1.2 L14.5 1 L14 5" fill="none" stroke="#afb1b3" stroke-width="1.4"/><path d="M5.5 16.8 L1.5 17 L2 13" fill="none" stroke="#afb1b3" stroke-width="1.4"/>
<rect x="1" y="7.3" width="4.5" height="3.6" fill="none" stroke="#afb1b3" stroke-width="1.3"/><rect x="10.5" y="7.3" width="4.5" height="3.6" fill="none" stroke="#afb1b3" stroke-width="1.3"/></svg>
<div class="a" style="left:884px;top:112px;width:1px;height:24px;background:#515658;"></div>
<svg style="left:899px;top:117px" width="11" height="15" viewBox="0 0 11 15"><path d="M1 4.5 Q1 0.8 5.5 0.8 Q10 0.8 10 4.3 Q10 6.3 7.5 7.6 Q5.6 8.6 5.6 10.5" fill="none" stroke="#afb1b3" stroke-width="2"/><rect x="4.4" y="12.5" width="2.4" height="2.4" fill="#afb1b3"/></svg>
<div class="t" style="left:1167.50px;top:116.96px;font-size:16px;color:#bbbbbb;letter-spacing:0.157px;">4 differences</div>
<div class="t" style="left:343.00px;top:145.96px;font-size:16px;color:#bbbbbb;letter-spacing:0.361px;">\main.py</div>
<div class="t" style="left:343.00px;top:168.96px;font-size:16px;color:#bbbbbb;letter-spacing:0.361px;">\main.py</div>
<div class="a" style="left:337px;top:189px;width:929px;height:640px;overflow:hidden">
<div class="a" style="left:0.00px;top:252.00px;width:929px;height:68px;background:#474a4a;"></div>
<div class="a" style="left:139.00px;top:0.00px;width:1px;height:639px;background:#555758;"></div>
<div class="t mono" style="left:150.00px;top:-8.41px;font-size:20px;white-space:pre"><span style="color:#a9b7c6">    </span><span style="color:#cc7832">def</span><span style="color:#a9b7c6"> __init__(self):</span></div>
<div class="t mono" style="left:17.20px;top:-7.64px;font-size:19px;color:#606366">32</div>
<div class="t mono" style="left:56.20px;top:-7.64px;font-size:19px;color:#606366">32</div>
<div class="t mono" style="left:150.00px;top:25.35px;font-size:20px;white-space:pre"><span style="color:#a9b7c6">        super().__init__()</span></div>
<div class="t mono" style="left:17.20px;top:26.12px;font-size:19px;color:#606366">33</div>
<div class="t mono" style="left:56.20px;top:26.12px;font-size:19px;color:#606366">33</div>
<div class="t mono" style="left:150.00px;top:59.11px;font-size:20px;white-space:pre"><span style="color:#a9b7c6">        self.image = player_image</span></div>
<div class="t mono" style="left:17.20px;top:59.88px;font-size:19px;color:#606366">34</div>
<div class="t mono" style="left:56.20px;top:59.88px;font-size:19px;color:#606366">34</div>
<div class="t mono" style="left:150.00px;top:92.87px;font-size:20px;white-space:pre"><span style="color:#a9b7c6">        self.rect = self.image.get_rect()</span></div>
<div class="t mono" style="left:17.20px;top:93.64px;font-size:19px;color:#606366">35</div>
<div class="t mono" style="left:56.20px;top:93.64px;font-size:19px;color:#606366">35</div>
<div class="t mono" style="left:150.00px;top:126.63px;font-size:20px;white-space:pre"><span style="color:#a9b7c6">        self.rect.centerx = SCREEN_WIDTH // </span><span style="color:#6897bb">2</span></div>
<div class="t mono" style="left:17.20px;top:127.40px;font-size:19px;color:#606366">36</div>
<div class="t mono" style="left:56.20px;top:127.40px;font-size:19px;color:#606366">36</div>
<div class="t mono" style="left:150.00px;top:160.39px;font-size:20px;white-space:pre"><span style="color:#a9b7c6">        self.rect.bottom = SCREEN_HEIGHT - </span><span style="color:#6897bb">10</span></div>
<div class="t mono" style="left:17.20px;top:161.16px;font-size:19px;color:#606366">37</div>
<div class="t mono" style="left:56.20px;top:161.16px;font-size:19px;color:#606366">37</div>
<div class="t mono" style="left:150.00px;top:194.15px;font-size:20px;white-space:pre"><span style="color:#a9b7c6">        self.speedx = </span><span style="color:#6897bb">0</span></div>
<div class="t mono" style="left:17.20px;top:194.92px;font-size:19px;color:#606366">38</div>
<div class="t mono" style="left:56.20px;top:194.92px;font-size:19px;color:#606366">38</div>
<div class="t mono" style="left:150.00px;top:227.91px;font-size:20px;white-space:pre"><span style="color:#a9b7c6">        self.lives = </span><span style="color:#6897bb">3</span><span style="color:#808080">  # 增加玩家生命值属性</span></div>
<div class="t mono" style="left:17.20px;top:228.68px;font-size:19px;color:#606366">39</div>
<div class="t mono" style="left:56.20px;top:228.68px;font-size:19px;color:#606366">39</div>
<div class="t mono" style="left:150.00px;top:261.67px;font-size:20px;white-space:pre"><span style="color:#a9b7c6">        self.invulnerable = </span><span style="color:#cc7832">False</span><span style="color:#808080">  # 添加无敌状态属性</span></div>
<div class="t mono" style="left:17.20px;top:262.44px;font-size:19px;color:#a4a3a3">40</div>
<div class="t mono" style="left:150.00px;top:295.43px;font-size:20px;white-space:pre"><span style="color:#a9b7c6">        self.invulnerable_time = </span><span style="color:#6897bb">0</span><span style="color:#808080">  # 添加无敌时间属性</span></div>
<div class="t mono" style="left:17.20px;top:296.20px;font-size:19px;color:#606366">41</div>
<div class="t mono" style="left:150.00px;top:329.19px;font-size:20px;white-space:pre"></div>
<div class="t mono" style="left:17.20px;top:329.96px;font-size:19px;color:#606366">42</div>
<div class="t mono" style="left:56.20px;top:329.96px;font-size:19px;color:#606366">40</div>
<div class="t mono" style="left:150.00px;top:362.95px;font-size:20px;white-space:pre"><span style="color:#a9b7c6">    </span><span style="color:#cc7832">def</span><span style="color:#a9b7c6"> update(self):</span></div>
<div class="t mono" style="left:17.20px;top:363.72px;font-size:19px;color:#606366">43</div>
<div class="t mono" style="left:56.20px;top:363.72px;font-size:19px;color:#606366">41</div>
<div class="t mono" style="left:150.00px;top:396.71px;font-size:20px;white-space:pre"><span style="color:#a9b7c6">        self.speedx = </span><span style="color:#6897bb">0</span></div>
<div class="t mono" style="left:17.20px;top:397.48px;font-size:19px;color:#606366">44</div>
<div class="t mono" style="left:56.20px;top:397.48px;font-size:19px;color:#606366">42</div>
<div class="t mono" style="left:150.00px;top:430.47px;font-size:20px;white-space:pre"><span style="color:#a9b7c6">        keystate = pygame.key.get_pressed()</span></div>
<div class="t mono" style="left:17.20px;top:431.24px;font-size:19px;color:#606366">45</div>
<div class="t mono" style="left:56.20px;top:431.24px;font-size:19px;color:#606366">43</div>
<div class="t mono" style="left:150.00px;top:464.23px;font-size:20px;white-space:pre"><span style="color:#a9b7c6">        </span><span style="color:#cc7832">if</span><span style="color:#a9b7c6"> keystate[pygame.K_LEFT]:</span></div>
<div class="t mono" style="left:17.20px;top:465.00px;font-size:19px;color:#606366">46</div>
<div class="t mono" style="left:56.20px;top:465.00px;font-size:19px;color:#606366">44</div>
<div class="t mono" style="left:150.00px;top:497.99px;font-size:20px;white-space:pre"><span style="color:#a9b7c6">            self.speedx = -</span><span style="color:#6897bb">5</span></div>
<div class="t mono" style="left:17.20px;top:498.76px;font-size:19px;color:#606366">47</div>
<div class="t mono" style="left:56.20px;top:498.76px;font-size:19px;color:#606366">45</div>
<div class="t mono" style="left:150.00px;top:531.75px;font-size:20px;white-space:pre"><span style="color:#a9b7c6">        </span><span style="color:#cc7832">if</span><span style="color:#a9b7c6"> keystate[pygame.K_RIGHT]:</span></div>
<div class="t mono" style="left:17.20px;top:532.52px;font-size:19px;color:#606366">48</div>
<div class="t mono" style="left:56.20px;top:532.52px;font-size:19px;color:#606366">46</div>
<div class="t mono" style="left:150.00px;top:565.51px;font-size:20px;white-space:pre"><span style="color:#a9b7c6">            self.speedx = </span><span style="color:#6897bb">5</span></div>
<div class="t mono" style="left:17.20px;top:566.28px;font-size:19px;color:#606366">49</div>
<div class="t mono" style="left:56.20px;top:566.28px;font-size:19px;color:#606366">47</div>
<div class="t mono" style="left:150.00px;top:599.27px;font-size:20px;white-space:pre"><span style="color:#a9b7c6">        self.rect.x += self.speedx</span></div>
<div class="t mono" style="left:17.20px;top:600.04px;font-size:19px;color:#606366">50</div>
<div class="t mono" style="left:56.20px;top:600.04px;font-size:19px;color:#606366">48</div>
<div class="t mono" style="left:150.00px;top:633.03px;font-size:20px;white-space:pre"><span style="color:#a9b7c6">        </span><span style="color:#cc7832">if</span><span style="color:#a9b7c6"> self.rect.right &gt; SCREEN_WIDTH:</span></div>
<div class="t mono" style="left:17.20px;top:633.80px;font-size:19px;color:#606366">51</div>
<div class="t mono" style="left:56.20px;top:633.80px;font-size:19px;color:#606366">49</div>
<svg style="left:87.00px;top:261.00px" width="21" height="19.5" viewBox="0 0 21 19.5"><path d="M1.5 5.5 H13 A6.5 6.5 0 0 1 13 18.5 H8.5" fill="none" stroke="#b4b6b8" stroke-width="1.5"/><path d="M6.5 0.8 L1.5 5.5 L6.5 10.2" fill="none" stroke="#b4b6b8" stroke-width="1.5"/></svg>
<svg style="left:114.00px;top:261.00px" width="17" height="17" viewBox="0 0 17 17"><path d="M1 4 L7.5 16 L16 1" fill="none" stroke="#7a8893" stroke-width="2"/></svg>
<div class="a" style="left:149.00px;top:256.00px;width:2px;height:27px;background:#c8c8c8;"></div>
<svg style="left:132.00px;top:91.00px" width="16" height="18" viewBox="0 0 16 18"><path d="M0.75 17.25 V6.3 L8 0.7 L15.25 6.3 V17.25 Z" fill="#2b2b2b" stroke="#555758" stroke-width="1.5"/><path d="M4.5 10.4 H11" stroke="#555758" stroke-width="1.3"/></svg>
<svg style="left:132.00px;top:466.00px" width="16" height="18" viewBox="0 0 16 18"><path d="M0.75 0.75 V10.2 L8 16.8 L15.25 10.2 V0.75 Z" fill="#2b2b2b" stroke="#555758" stroke-width="1.5"/><path d="M4.5 7.2 H11" stroke="#555758" stroke-width="1.3"/></svg>
<svg style="left:132.00px;top:631.00px" width="16" height="18" viewBox="0 0 16 18"><path d="M0.75 17.25 V6.3 L8 0.7 L15.25 6.3 V17.25 Z" fill="#2b2b2b" stroke="#555758" stroke-width="1.5"/></svg>
<div class="a" style="left:150.00px;top:628.00px;width:430px;height:10px;background:rgba(110,110,110,0.5);"></div>
<div class="a" style="left:917.00px;top:110.00px;width:10px;height:63px;background:#4d4d4d;"></div>
<div class="a" style="left:912.00px;top:135.00px;width:17px;height:3px;background:#6b6f73;"></div>
<div class="a" style="left:912.00px;top:190.00px;width:17px;height:17px;background:#6b737b;"></div>
<div class="a" style="left:912.00px;top:561.00px;width:17px;height:3px;background:#6b737b;"></div>
<div class="a" style="left:912.00px;top:565.00px;width:17px;height:3px;background:#4e8a55;"></div>
<div class="a" style="left:912.00px;top:589.00px;width:17px;height:3.5px;background:#6b737b;"></div>
</div>
<svg style="left:352px;top:837px" width="16" height="16" viewBox="0 0 16 16"><circle cx="8" cy="8" r="7.2" fill="none" stroke="#e5a23b" stroke-width="1.6"/><rect x="7.1" y="6.8" width="1.8" height="5.5" fill="#e5a23b"/><rect x="7.1" y="3.6" width="1.8" height="1.8" fill="#e5a23b"/></svg>
<div class="t" style="left:375.00px;top:838.63px;font-size:15.2px;color:#bbbbbb;letter-spacing:0.15px;">当前文件的源文件有修改，请确认内容后再进行接受当前变更。</div>
<div class="t" style="left:1210.00px;top:838.46px;font-size:16px;color:#589df6;letter-spacing:0.531px;">Hide</div>
<svg style="left:754px;top:872px" width="15" height="13" viewBox="0 0 15 13"><path d="M7 0.8 L1.5 6.5 L7 12.2 M13.5 0.8 L8 6.5 L13.5 12.2" fill="none" stroke="#c8c8c8" stroke-width="1.6"/></svg>
<div class="t" style="left:781.70px;top:871.88px;font-size:15.5px;color:#bbbbbb;letter-spacing:0.026px;">1/1</div>
<svg style="left:818px;top:872px" width="15" height="13" viewBox="0 0 15 13"><path d="M1.5 0.8 L7 6.5 L1.5 12.2 M8 0.8 L13.5 6.5 L8 12.2" fill="none" stroke="#c8c8c8" stroke-width="1.6"/></svg>
<div class="a" style="left:845px;top:869px;width:1px;height:21px;background:#515658;"></div>
<div class="t" style="left:1274.50px;top:82.30px;font-size:15px;color:#bbbbbb;">通义灵码</div>
<svg style="left:1697px;top:79px" width="20" height="20" viewBox="0 0 20 20"><path d="M2.6 10 A7.6 7.6 0 1 0 4.8 4.6" fill="none" stroke="#afb1b3" stroke-width="1.8"/><path d="M1 2.5 L1.5 7.5 L6.5 6.8" fill="none" stroke="#afb1b3" stroke-width="1.8"/><path d="M10 5.5 V10.5 L13 12.5" fill="none" stroke="#afb1b3" stroke-width="1.8"/></svg>
<svg style="left:1729.5px;top:80px" width="18" height="17" viewBox="0 0 18 17"><path d="M8 1.5 H1.2 V16 H15.5 V9" fill="none" stroke="#afb1b3" stroke-width="1.8"/><path d="M6.5 11 L7 8.5 L15 0.8 L17.2 3 L9.2 10.7 Z" fill="none" stroke="#afb1b3" stroke-width="1.6"/></svg>
<svg style="left:1761px;top:79px" width="21" height="20" viewBox="0 0 21 20"><circle cx="10.5" cy="10" r="9" fill="none" stroke="#afb1b3" stroke-width="1.8"/><path d="M7.5 7.8 Q7.5 5 10.5 5 Q13.5 5 13.5 7.6 Q13.5 9.2 11.5 10.2 Q10.6 10.8 10.6 12.3" fill="none" stroke="#afb1b3" stroke-width="1.7"/><rect x="9.6" y="13.6" width="2" height="2" fill="#afb1b3"/></svg>
<svg style="left:1793px;top:79.5px" width="21" height="19" viewBox="0 0 21 19"><path d="M7.5 0.8 A6 6 0 0 0 1.2 7.3 L4 4.5 L7 7.5 L4.2 10.3 A6 6 0 0 0 10.6 4 Z" fill="none" stroke="#afb1b3" stroke-width="1.6" stroke-linejoin="round"/><path d="M9.3 9 L19.5 18.2" stroke="#afb1b3" stroke-width="3.2" stroke-linecap="round"/><path d="M9.3 9 L19.5 18.2" stroke="#3c3f41" stroke-width="0.6"/></svg>
<div class="a" style="left:1824px;top:77px;width:1px;height:23px;background:#515658;"></div>
<svg style="left:1837px;top:81px" width="16" height="16" viewBox="0 0 16 16"><path fill="#afb1b3" fill-rule="evenodd" stroke="#afb1b3" stroke-width="0.5" stroke-linejoin="round" d="M5.48 2.34 L6.06 0.24 L9.94 0.24 L10.52 2.34 L11.64 2.98 L13.75 2.44 L15.69 5.79 L14.17 7.35 L14.17 8.65 L15.69 10.21 L13.75 13.56 L11.64 13.02 L10.52 13.66 L9.94 15.76 L6.06 15.76 L5.48 13.66 L4.36 13.02 L2.25 13.56 L0.31 10.21 L1.83 8.65 L1.83 7.35 L0.31 5.79 L2.25 2.44 L4.36 2.98 Z M8 5.0 A3.0 3.0 0 1 0 8 11.0 A3.0 3.0 0 1 0 8 5.0 Z"/></svg>
<div class="a" style="left:1870px;top:88px;width:16px;height:2.5px;background:#c8c8c8;"></div>
<div class="a" style="left:1267px;top:105px;width:626px;height:1px;background:#323232;"></div>
<div class="t" style="left:1282.50px;top:125.30px;font-size:15px;color:#bbbbbb;">智能问答</div>
<div class="t" style="left:1383.00px;top:125.30px;font-size:15px;color:#bbbbbb;letter-spacing:-0.3px;">AI 程序员</div>
<div class="a" style="left:1382px;top:153px;width:64px;height:3px;background:#4a88c7;"></div>
<svg style="left:1676px;top:121px" width="21" height="21" viewBox="0 0 21 21"><circle cx="10.5" cy="10.5" r="9.3" fill="none" stroke="#afb1b3" stroke-width="1.7"/><path d="M10.5 5.5 V15.5 M5.5 10.5 H15.5" stroke="#afb1b3" stroke-width="1.8"/></svg>
<div class="a" style="left:1718px;top:122px;width:1.5px;height:20px;background:#2b2b2b;"></div>
<svg style="left:1747px;top:121.5px" width="19" height="20" viewBox="0 0 19 20"><circle cx="9.5" cy="5.5" r="4.6" fill="none" stroke="#afb1b3" stroke-width="1.7"/><path d="M1 19.5 Q1 11.8 9.5 11.8 Q18 11.8 18 19.5" fill="none" stroke="#afb1b3" stroke-width="1.7"/></svg>
<div class="t" style="left:1774.00px;top:125.30px;font-size:15px;color:#bbbbbb;">北京宏哥</div>
<svg style="left:1850.5px;top:128px" width="12" height="7" viewBox="0 0 12 7"><path d="M0 0 H12 L6 7 Z" fill="#afb1b3"/></svg>
<div class="a" style="left:1267px;top:156px;width:626px;height:1px;background:#2b2b2b;"></div>
<div class="a" style="left:1267px;top:157px;width:626px;height:518px;overflow:hidden">
<div class="a" style="left:15.00px;top:-37.00px;width:579px;height:71px;background:#323436;border-radius:10px"></div>
<div class="t" style="left:63.00px;top:6.38px;font-size:15.5px;color:#bbbbbb;letter-spacing:0.1px;">的生命值，并设置无敌状态和无敌开始时间。</div>
<div class="a" style="left:15.00px;top:45.00px;width:579px;height:89px;background:#323436;border-radius:10px"></div>
<svg style="left:30.50px;top:57.50px" width="25" height="25" viewBox="0 0 25 25"><circle cx="12.5" cy="12.5" r="12.5" fill="#f39c34"/><text x="4.5" y="18.5" font-size="14" font-weight="bold" fill="#ffffff">北</text></svg>
<div class="t" style="left:65.00px;top:64.30px;font-size:15px;color:#bbbbbb;">北京宏哥</div>
<div class="t" style="left:506.50px;top:63.88px;font-size:15.5px;color:#8c8c8c;letter-spacing:-0.2px;">今天 09:06</div>
<div class="t" style="left:30.50px;top:99.96px;font-size:16px;color:#bbbbbb;">增加紧张的背景音乐</div>
<div class="a" style="left:15.00px;top:145.00px;width:579px;height:400px;background:#323436;border-radius:10px"></div>
<svg style="left:31.00px;top:158.00px" width="25" height="25" viewBox="0 0 25 25"><defs><linearGradient id="tyg" x1="0" y1="0" x2="1" y2="1"><stop offset="0" stop-color="#8a86ff"/><stop offset="1" stop-color="#6a2cf0"/></linearGradient></defs><g transform="scale(1.0000)"><path d="M8.5 0.5 L14 0.5 L15.5 3 L22.5 3.3 L24.5 7 L21 12 L25 16.5 L23 20 L17.5 20.5 L14.5 24.7 L10.5 24.5 L8 20.5 L3.5 20 L1.5 16.5 L4.5 12 L0.2 8.5 L2.2 4.5 L7 4 Z" fill="url(#tyg)"/><path d="M9.5 2.2 L5.8 8 H22.3 M3.2 8 L11.8 20.2 H5 M23.2 15.2 L19.6 11.6 L12.6 23.6" fill="none" stroke="#ffffff" stroke-width="2.3" stroke-linejoin="miter"/></g></svg>
<div class="t" style="left:62.00px;top:163.80px;font-size:15px;color:#bbbbbb;">通义灵码</div>
<div class="t" style="left:134.50px;top:163.80px;font-size:15px;color:#8c8c8c;letter-spacing:-0.3px;">@AI 程序员</div>
<svg style="left:468.00px;top:159.00px" width="18" height="19" viewBox="0 0 18 19"><path d="M5 0.9 H12 L17 5.5 V14.5 H5 Z" fill="none" stroke="#afb1b3" stroke-width="1.7"/><path d="M5 4 H1 V18 H12 V14.5" fill="none" stroke="#afb1b3" stroke-width="1.7"/><path d="M11.5 1 V6 H17" fill="none" stroke="#afb1b3" stroke-width="1.5"/></svg>
<svg style="left:511.50px;top:159.00px" width="20" height="19" viewBox="0 0 20 19"><path d="M1 8.5 H5 V18 H1 Z" fill="none" stroke="#afb1b3" stroke-width="1.7"/><path d="M5 8.5 L9 1 Q12 1 12 4 V7 H17.5 Q19 7.5 18.5 9.5 L16.5 17 Q16 18 14.5 18 H5" fill="none" stroke="#afb1b3" stroke-width="1.7" stroke-linejoin="round"/></svg>
<svg style="left:556.50px;top:159.00px" width="20" height="19" viewBox="0 0 20 19"><path d="M1 1 H5 V10.5 H1 Z" fill="none" stroke="#afb1b3" stroke-width="1.7"/><path d="M5 10.5 L9 18 Q12 18 12 15 V12 H17.5 Q19 11.5 18.5 9.5 L16.5 2 Q16 1 14.5 1 H5" fill="none" stroke="#afb1b3" stroke-width="1.7" stroke-linejoin="round"/></svg>
<div class="t" style="left:30.50px;top:220.88px;font-size:15.5px;color:#bbbbbb;letter-spacing:-0.05px;">为了增加紧张的背景音乐，我们需要加载一个新的背景音乐文件，并在游戏开</div>
<div class="t" style="left:30.50px;top:250.38px;font-size:15.5px;color:#bbbbbb;letter-spacing:-0.1px">始时播放它。假设新的背景音乐文件名为<span style="font-family:'Liberation Mono',monospace;color:#cc8c47;font-size:13.2px;letter-spacing:0">tense_background_music.mp3</span>，我们</div>
<div class="t" style="left:30.50px;top:277.88px;font-size:15.5px;color:#bbbbbb;">将对其进行替换。</div>
<div class="t" style="left:30.50px;top:312.88px;font-size:15.5px;color:#bbbbbb;">以下是修改后的代码：</div>
<div class="a" style="left:30.00px;top:353.00px;width:549px;height:30px;background:#3a3d3f;border-radius:5px"></div>
<svg style="left:44.00px;top:359.00px" width="13" height="18" viewBox="0 0 13 18"><path d="M5.6 0 H12.5 V18 H0 V5.6 H5.6 Z" fill="#87939a"/><path d="M0 4.7 L4.7 0 V4.7 Z" fill="#9aa5ab"/><g transform="translate(5,6.5) scale(0.68)"><path d="M8.8 0.5 C5 0.5 5.3 2.2 5.3 2.2 L5.3 4 L9 4 L9 4.6 L3.6 4.6 C3.6 4.6 1 4.3 1 8.4 C1 12.5 3.3 12.4 3.3 12.4 L4.7 12.4 L4.7 10.4 C4.7 10.4 4.6 8.1 7 8.1 L10.8 8.1 C10.8 8.1 13 8.1 13 6 L13 2.6 C13 2.6 13.3 0.5 8.8 0.5 Z" fill="#3d7aab"/>
<path d="M9.2 17.5 C13 17.5 12.7 15.8 12.7 15.8 L12.7 14 L9 14 L9 13.4 L14.4 13.4 C14.4 13.4 17 13.7 17 9.6 C17 5.5 14.7 5.6 14.7 5.6 L13.3 5.6 L13.3 7.6 C13.3 7.6 13.4 9.9 11 9.9 L7.2 9.9 C7.2 9.9 5 9.9 5 12 L5 15.4 C5 15.4 4.7 17.5 9.2 17.5 Z" fill="#f2c53d"/></g></svg>
<div class="t" style="left:71.00px;top:359.61px;font-size:17px;color:#bbbbbb;letter-spacing:0.079px;">main.py</div>
<div class="t" style="left:441.70px;top:360.46px;font-size:16px;color:#8c8c8c;letter-spacing:0.292px;">4 / 4</div>
<svg style="left:496.00px;top:360.00px" width="16" height="16" viewBox="0 0 16 16"><circle cx="8" cy="8" r="7" fill="none" stroke="#4ea758" stroke-width="1.6"/><path d="M4.6 8.2 L7 10.6 L11.5 5.8" fill="none" stroke="#4ea758" stroke-width="1.6"/></svg>
<div class="t" style="left:519.50px;top:360.80px;font-size:15px;color:#8c8c8c;">已接受</div>
<div class="t" style="left:30.50px;top:408.38px;font-size:15.5px;color:#bbbbbb;">变更解释：</div>
<div class="t" style="left:45.00px;top:443.96px;font-size:16px;color:#bbbbbb;">1.</div>
<div class="t" style="left:63.00px;top:444.38px;font-size:15.5px;color:#bbbbbb;letter-spacing:-0.05px">修改了背景音乐文件名为<span style="font-family:'Liberation Mono',monospace;color:#cc8c47;font-size:13.2px;letter-spacing:0">tense_background_music.mp3</span>，以加载新的紧张</div>
<div class="t" style="left:63.00px;top:471.88px;font-size:15.5px;color:#bbbbbb;">背景音乐。</div>
<div class="a" style="left:15.00px;top:501.00px;width:579px;height:2px;background:#3c3f41;"></div>
<div class="a" style="left:30.00px;top:512.00px;width:58px;height:20px;background:#3a3d3f;border-radius:6px"></div>
</div>
<div class="a" style="left:1881px;top:580px;width:9px;height:85px;background:#58595b;"></div>
<div class="a" style="left:1282px;top:680px;width:597px;height:85px;background:#2b2b2b;border-radius:10px 10px 0 0"></div>
<div class="a" style="left:1282px;top:720px;width:597px;height:1px;background:#3c3f41;"></div>
<svg style="left:1302.5px;top:696px" width="11" height="7" viewBox="0 0 11 7"><path d="M0.8 0.8 L5.5 5.8 L10.2 0.8" fill="none" stroke="#bbbbbb" stroke-width="1.6"/></svg>
<div class="t" style="left:1323.70px;top:692.96px;font-size:16px;color:#bbbbbb;">工作区</div>
<div class="t" style="left:1385.00px;top:692.80px;font-size:15px;color:#8c8c8c;">最新</div>
<svg style="left:1425px;top:696px" width="11" height="7" viewBox="0 0 11 7"><path d="M0.8 0.8 L5.5 5.8 L10.2 0.8" fill="none" stroke="#bbbbbb" stroke-width="1.6"/></svg>
<svg style="left:1796.5px;top:691.5px" width="16" height="16" viewBox="0 0 16 16"><circle cx="8" cy="8" r="7" fill="none" stroke="#4ea758" stroke-width="1.6"/><path d="M4.6 8.2 L7 10.6 L11.5 5.8" fill="none" stroke="#4ea758" stroke-width="1.6"/></svg>
<div class="t" style="left:1819.50px;top:692.80px;font-size:15px;color:#8c8c8c;">已接受</div>
<svg style="left:1301px;top:733px" width="13" height="18" viewBox="0 0 13 18"><path d="M5.6 0 H12.5 V18 H0 V5.6 H5.6 Z" fill="#87939a"/><path d="M0 4.7 L4.7 0 V4.7 Z" fill="#9aa5ab"/><g transform="translate(5,6.5) scale(0.68)"><path d="M8.8 0.5 C5 0.5 5.3 2.2 5.3 2.2 L5.3 4 L9 4 L9 4.6 L3.6 4.6 C3.6 4.6 1 4.3 1 8.4 C1 12.5 3.3 12.4 3.3 12.4 L4.7 12.4 L4.7 10.4 C4.7 10.4 4.6 8.1 7 8.1 L10.8 8.1 C10.8 8.1 13 8.1 13 6 L13 2.6 C13 2.6 13.3 0.5 8.8 0.5 Z" fill="#3d7aab"/>
<path d="M9.2 17.5 C13 17.5 12.7 15.8 12.7 15.8 L12.7 14 L9 14 L9 13.4 L14.4 13.4 C14.4 13.4 17 13.7 17 9.6 C17 5.5 14.7 5.6 14.7 5.6 L13.3 5.6 L13.3 7.6 C13.3 7.6 13.4 9.9 11 9.9 L7.2 9.9 C7.2 9.9 5 9.9 5 12 L5 15.4 C5 15.4 4.7 17.5 9.2 17.5 Z" fill="#f2c53d"/></g></svg>
<div class="t" style="left:1328.00px;top:734.61px;font-size:17px;color:#bbbbbb;letter-spacing:0.079px;">main.py</div>
<svg style="left:1796.5px;top:732.5px" width="16" height="16" viewBox="0 0 16 16"><circle cx="8" cy="8" r="7" fill="none" stroke="#4ea758" stroke-width="1.6"/><path d="M4.6 8.2 L7 10.6 L11.5 5.8" fill="none" stroke="#4ea758" stroke-width="1.6"/></svg>
<div class="t" style="left:1819.50px;top:733.80px;font-size:15px;color:#8c8c8c;">已接受</div>
<div class="a" style="left:1267px;top:764px;width:626px;height:1px;background:#2b2b2b;"></div>
<div class="a" style="left:1282px;top:778px;width:597px;height:122px;background:#2b2b2b;border-radius:10px"></div>
<div class="a" style="left:1297px;top:790px;width:25px;height:25px;background:#3c3f41;border-radius:4px"></div>
<svg style="left:1302px;top:795px" width="15" height="15" viewBox="0 0 15 15"><path d="M7.5 0.5 V14.5 M0.5 7.5 H14.5" stroke="#bbbbbb" stroke-width="1.6"/></svg>
<div class="t" style="left:1327.50px;top:795.03px;font-size:16.5px;color:#bbbbbb;letter-spacing:-0.2px;">添加上下文</div>
<div class="t" style="left:1306.00px;top:840.11px;font-size:17px;color:#787878;letter-spacing:-0.1px;">详细描述你的任务或者问题</div>
<div class="t" style="left:1300.80px;top:870.96px;font-size:16px;color:#bbbbbb;letter-spacing:0.111px;">qwen-2.5</div>
<svg style="left:1375px;top:875px" width="10" height="7" viewBox="0 0 10 7"><path d="M0.8 0.8 L5 5.5 L9.2 0.8" fill="none" stroke="#bbbbbb" stroke-width="1.7"/></svg>
<div class="t" style="left:1641.50px;top:870.96px;font-size:16px;color:#8c8c8c;letter-spacing:0px;">Ctrl+Enter 换行/Enter 发送</div>
<svg style="left:1843px;top:871px" width="18" height="14" viewBox="0 0 18 14"><path d="M0 7 H16.5 M10.5 1 L16.5 7 L10.5 13" fill="none" stroke="#c8c8c8" stroke-width="1.8"/></svg>
<svg style="left:1901px;top:85px" width="14" height="15" viewBox="0 0 14 15"><ellipse cx="7" cy="2.5" rx="6.5" ry="2.3" fill="#afb1b3"/><path d="M0.5 5 Q7 8.5 13.5 5 V7.2 Q7 10.5 0.5 7.2 Z M0.5 9 Q7 12.5 13.5 9 V11.5 Q7 15 0.5 11.5 Z" fill="#afb1b3"/></svg>
<div class="t" style="left:1900px;top:106px;font-size:13.5px;color:#bbbbbb;transform-origin:0 0;transform:rotate(90deg) translate(0,-15px);letter-spacing:0.1px">Database</div>
<svg style="left:1901px;top:192px" width="14" height="12" viewBox="0 0 14 12"><g fill="#afb1b3"><rect x="0" y="0" width="14" height="2.2"/><rect x="0" y="3.3" width="3" height="2.2"/><rect x="4" y="3.3" width="3" height="2.2"/><rect x="7.5" y="3.3" width="3" height="2.2"/><rect x="11" y="3.3" width="3" height="2.2"/><rect x="0" y="6.6" width="3" height="2.2"/><rect x="4" y="6.6" width="3" height="2.2"/><rect x="7.5" y="6.6" width="3" height="2.2"/><rect x="11" y="6.6" width="3" height="2.2"/><rect x="0" y="9.8" width="3" height="2.2"/><rect x="4" y="9.8" width="3" height="2.2"/><rect x="7.5" y="9.8" width="3" height="2.2"/><rect x="11" y="9.8" width="3" height="2.2"/></g></svg>
<div class="t" style="left:1900px;top:211px;font-size:13.5px;color:#bbbbbb;transform-origin:0 0;transform:rotate(90deg) translate(0,-15px);letter-spacing:0.1px">SciView</div>
<div class="a" style="left:1894px;top:270px;width:26px;height:98px;background:#2f3132;"></div>
<svg style="left:1900px;top:284px" width="15" height="15" viewBox="0 0 15 15"><g transform="scale(0.6000)"><path d="M8.5 0.5 L14 0.5 L15.5 3 L22.5 3.3 L24.5 7 L21 12 L25 16.5 L23 20 L17.5 20.5 L14.5 24.7 L10.5 24.5 L8 20.5 L3.5 20 L1.5 16.5 L4.5 12 L0.2 8.5 L2.2 4.5 L7 4 Z" fill="#c4c4c4"/><path d="M9.5 2.2 L5.8 8 H22.3 M3.2 8 L11.8 20.2 H5 M23.2 15.2 L19.6 11.6 L12.6 23.6" fill="none" stroke="#2f3132" stroke-width="2.3" stroke-linejoin="miter"/></g></svg>
<div class="t" style="left:1897px;top:305px;font-size:13px;color:#dcdcdc;transform-origin:0 0;transform:rotate(90deg) translate(0,-15px) scaleY(1.08)">通义灵码</div>
<div class="t" style="left:35.00px;top:922.88px;font-size:15.5px;color:#bbbbbb;letter-spacing:-0.247px;">Run:</div>
<svg style="left:92px;top:920px" width="18" height="18" viewBox="0 0 18 18"><g opacity="0.6"><path d="M8.8 0.5 C5 0.5 5.3 2.2 5.3 2.2 L5.3 4 L9 4 L9 4.6 L3.6 4.6 C3.6 4.6 1 4.3 1 8.4 C1 12.5 3.3 12.4 3.3 12.4 L4.7 12.4 L4.7 10.4 C4.7 10.4 4.6 8.1 7 8.1 L10.8 8.1 C10.8 8.1 13 8.1 13 6 L13 2.6 C13 2.6 13.3 0.5 8.8 0.5 Z" fill="#3d7aab"/>
<path d="M9.2 17.5 C13 17.5 12.7 15.8 12.7 15.8 L12.7 14 L9 14 L9 13.4 L14.4 13.4 C14.4 13.4 17 13.7 17 9.6 C17 5.5 14.7 5.6 14.7 5.6 L13.3 5.6 L13.3 7.6 C13.3 7.6 13.4 9.9 11 9.9 L7.2 9.9 C7.2 9.9 5 9.9 5 12 L5 15.4 C5 15.4 4.7 17.5 9.2 17.5 Z" fill="#f2c53d"/></g></svg>
<div class="t" style="left:116.00px;top:922.46px;font-size:16px;color:#bbbbbb;letter-spacing:-0.240px;">main (2)</div>
<svg style="left:183px;top:925px" width="10" height="10" viewBox="0 0 10 10"><path d="M0.5 0.5 L9.5 9.5 M9.5 0.5 L0.5 9.5" stroke="#6f7375" stroke-width="1.2"/></svg>
<div class="a" style="left:76px;top:944px;width:130px;height:3px;background:#6d7073;"></div>
<svg style="left:1837px;top:923px" width="16" height="16" viewBox="0 0 16 16"><path fill="#afb1b3" fill-rule="evenodd" stroke="#afb1b3" stroke-width="0.5" stroke-linejoin="round" d="M5.48 2.34 L6.06 0.24 L9.94 0.24 L10.52 2.34 L11.64 2.98 L13.75 2.44 L15.69 5.79 L14.17 7.35 L14.17 8.65 L15.69 10.21 L13.75 13.56 L11.64 13.02 L10.52 13.66 L9.94 15.76 L6.06 15.76 L5.48 13.66 L4.36 13.02 L2.25 13.56 L0.31 10.21 L1.83 8.65 L1.83 7.35 L0.31 5.79 L2.25 2.44 L4.36 2.98 Z M8 5.0 A3.0 3.0 0 1 0 8 11.0 A3.0 3.0 0 1 0 8 5.0 Z"/></svg>
<div class="a" style="left:1870px;top:928.5px;width:16px;height:2.5px;background:#c8c8c8;"></div>
<svg style="left:41px;top:954px" width="9" height="7" viewBox="0 0 9 7"><path d="M0.7 0.7 L3.5 3.5 L0.7 6.3 M5 0.7 L7.8 3.5 L5 6.3" fill="none" stroke="#afb1b3" stroke-width="1.1"/></svg>
<svg style="left:77px;top:954px" width="9" height="7" viewBox="0 0 9 7"><path d="M0.7 0.7 L3.5 3.5 L0.7 6.3 M5 0.7 L7.8 3.5 L5 6.3" fill="none" stroke="#afb1b3" stroke-width="1.1"/></svg>
<div class="a" style="left:174px;top:967px;width:67px;height:27px;background:#2f3132;"></div>
<svg style="left:44px;top:974.5px" width="11" height="15" viewBox="0 0 11 15"><circle cx="2" cy="2" r="1.6" fill="none" stroke="#afb1b3" stroke-width="1.3"/><circle cx="2" cy="13" r="1.6" fill="#afb1b3"/><circle cx="9" cy="4" r="1.6" fill="none" stroke="#afb1b3" stroke-width="1.3"/><path d="M2 3.5 V11.5 M9 5.5 Q9 9 2 10" fill="none" stroke="#afb1b3" stroke-width="1.6"/></svg>
<div class="t" style="left:63.00px;top:977.49px;font-size:13.6px;color:#bbbbbb;letter-spacing:0.162px;">Version Control</div>
<svg style="left:187px;top:976px" width="10" height="12" viewBox="0 0 10 12"><path d="M0 0 L10 6 L0 12 Z" fill="#afb1b3"/></svg>
<div class="t" style="left:206.00px;top:977.49px;font-size:13.6px;color:#f0f0f0;letter-spacing:-0.825px;">Run</div>
<svg style="left:255.5px;top:976px" width="13" height="12" viewBox="0 0 13 12"><g fill="#afb1b3"><rect x="0" y="0" width="2.4" height="2.2"/><rect x="3.6" y="0" width="9.4" height="2.2"/><rect x="0" y="4.8" width="2.4" height="2.2"/><rect x="3.6" y="4.8" width="9.4" height="2.2"/><rect x="0" y="9.6" width="2.4" height="2.2"/><rect x="3.6" y="9.6" width="9.4" height="2.2"/></g></svg>
<div class="t" style="left:275.00px;top:977.49px;font-size:13.6px;color:#bbbbbb;letter-spacing:-0.262px;">TODO</div>
<svg style="left:340px;top:975px" width="13.5" height="13.5" viewBox="0 0 13.5 13.5"><circle cx="6.75" cy="6.75" r="6.75" fill="#afb1b3"/><rect x="5.8" y="2.8" width="1.9" height="5.2" fill="#3c3f41"/><rect x="5.8" y="9.3" width="1.9" height="1.9" fill="#3c3f41"/></svg>
<div class="t" style="left:360.00px;top:977.49px;font-size:13.6px;color:#bbbbbb;letter-spacing:-0.135px;">Problems</div>
<svg style="left:444px;top:975px" width="14.5" height="13" viewBox="0 0 14.5 13"><rect x="0" y="0" width="14.5" height="13" fill="#afb1b3"/><path d="M2.5 3 L5.5 5.5 L2.5 8" fill="none" stroke="#3c3f41" stroke-width="1.4"/><rect x="7" y="8.5" width="5" height="1.4" fill="#3c3f41"/></svg>
<div class="t" style="left:465.00px;top:977.49px;font-size:13.6px;color:#bbbbbb;letter-spacing:-0.200px;">Terminal</div>
<svg style="left:545px;top:974px" width="15" height="15" viewBox="0 0 15 15"><path d="M7.5 0.5 L14.5 4 L7.5 7.5 L0.5 4 Z" fill="#afb1b3"/><path d="M0.5 7.5 L7.5 11 L14.5 7.5 M0.5 11 L7.5 14.5 L14.5 11" fill="none" stroke="#afb1b3" stroke-width="1.5"/></svg>
<div class="t" style="left:566.00px;top:977.49px;font-size:13.6px;color:#bbbbbb;letter-spacing:-0.061px;">Python Packages</div>
<svg style="left:702.5px;top:974.5px" width="15" height="15" viewBox="0 0 15 15"><g transform="scale(0.83)"><path d="M8.8 0.5 C5 0.5 5.3 2.2 5.3 2.2 L5.3 4 L9 4 L9 4.6 L3.6 4.6 C3.6 4.6 1 4.3 1 8.4 C1 12.5 3.3 12.4 3.3 12.4 L4.7 12.4 L4.7 10.4 C4.7 10.4 4.6 8.1 7 8.1 L10.8 8.1 C10.8 8.1 13 8.1 13 6 L13 2.6 C13 2.6 13.3 0.5 8.8 0.5 Z" fill="#afb1b3"/>
<path d="M9.2 17.5 C13 17.5 12.7 15.8 12.7 15.8 L12.7 14 L9 14 L9 13.4 L14.4 13.4 C14.4 13.4 17 13.7 17 9.6 C17 5.5 14.7 5.6 14.7 5.6 L13.3 5.6 L13.3 7.6 C13.3 7.6 13.4 9.9 11 9.9 L7.2 9.9 C7.2 9.9 5 9.9 5 12 L5 15.4 C5 15.4 4.7 17.5 9.2 17.5 Z" fill="#8a8d90"/></g></svg>
<div class="t" style="left:724.00px;top:977.49px;font-size:13.6px;color:#bbbbbb;letter-spacing:0.075px;">Python Console</div>
<div class="a" style="left:1798.5px;top:974px;width:17px;height:17.5px;background:#eea93a;border-radius:4px"></div>
<div class="t" style="left:1803.00px;top:977.84px;font-size:12px;color:#3c3f41;font-weight:bold;">5</div>
<div class="t" style="left:1820.00px;top:977.49px;font-size:13.6px;color:#bbbbbb;letter-spacing:-0.031px;">Event Log</div>
<svg style="left:6.5px;top:1000px" width="16" height="16" viewBox="0 0 16 16"><rect x="4" y="0.7" width="11.3" height="11.3" fill="none" stroke="#afb1b3" stroke-width="1.4"/><path d="M0.7 3.5 V15.3 H12.5" fill="none" stroke="#afb1b3" stroke-width="1.4"/></svg>
<div class="t" style="left:34.00px;top:1000.46px;font-size:16px;color:#bbbbbb;letter-spacing:0.214px;">License expired: Your PyCharm subscription expired on 2023/12/31.If you don&#x27;t renew it before 2297/10/15, you will no longer be able to use the product. // Renew License</div>
<div class="t" style="left:1293.50px;top:1000.46px;font-size:16px;color:#bbbbbb;letter-spacing:0.023px;">Fallback Options (4 minutes ago)</div>
<div class="t" style="left:1785.00px;top:1000.46px;font-size:16px;color:#bbbbbb;letter-spacing:0.060px;">Python 3.10</div>
<svg style="left:1885px;top:997.5px" width="21" height="21" viewBox="0 0 21 21"><g transform="scale(0.8400)"><path d="M8.5 0.5 L14 0.5 L15.5 3 L22.5 3.3 L24.5 7 L21 12 L25 16.5 L23 20 L17.5 20.5 L14.5 24.7 L10.5 24.5 L8 20.5 L3.5 20 L1.5 16.5 L4.5 12 L0.2 8.5 L2.2 4.5 L7 4 Z" fill="#7b6cf6"/><path d="M9.5 2.2 L5.8 8 H22.3 M3.2 8 L11.8 20.2 H5 M23.2 15.2 L19.6 11.6 L12.6 23.6" fill="none" stroke="#ffffff" stroke-width="2.3" stroke-linejoin="miter"/></g></svg>
</body></html>
